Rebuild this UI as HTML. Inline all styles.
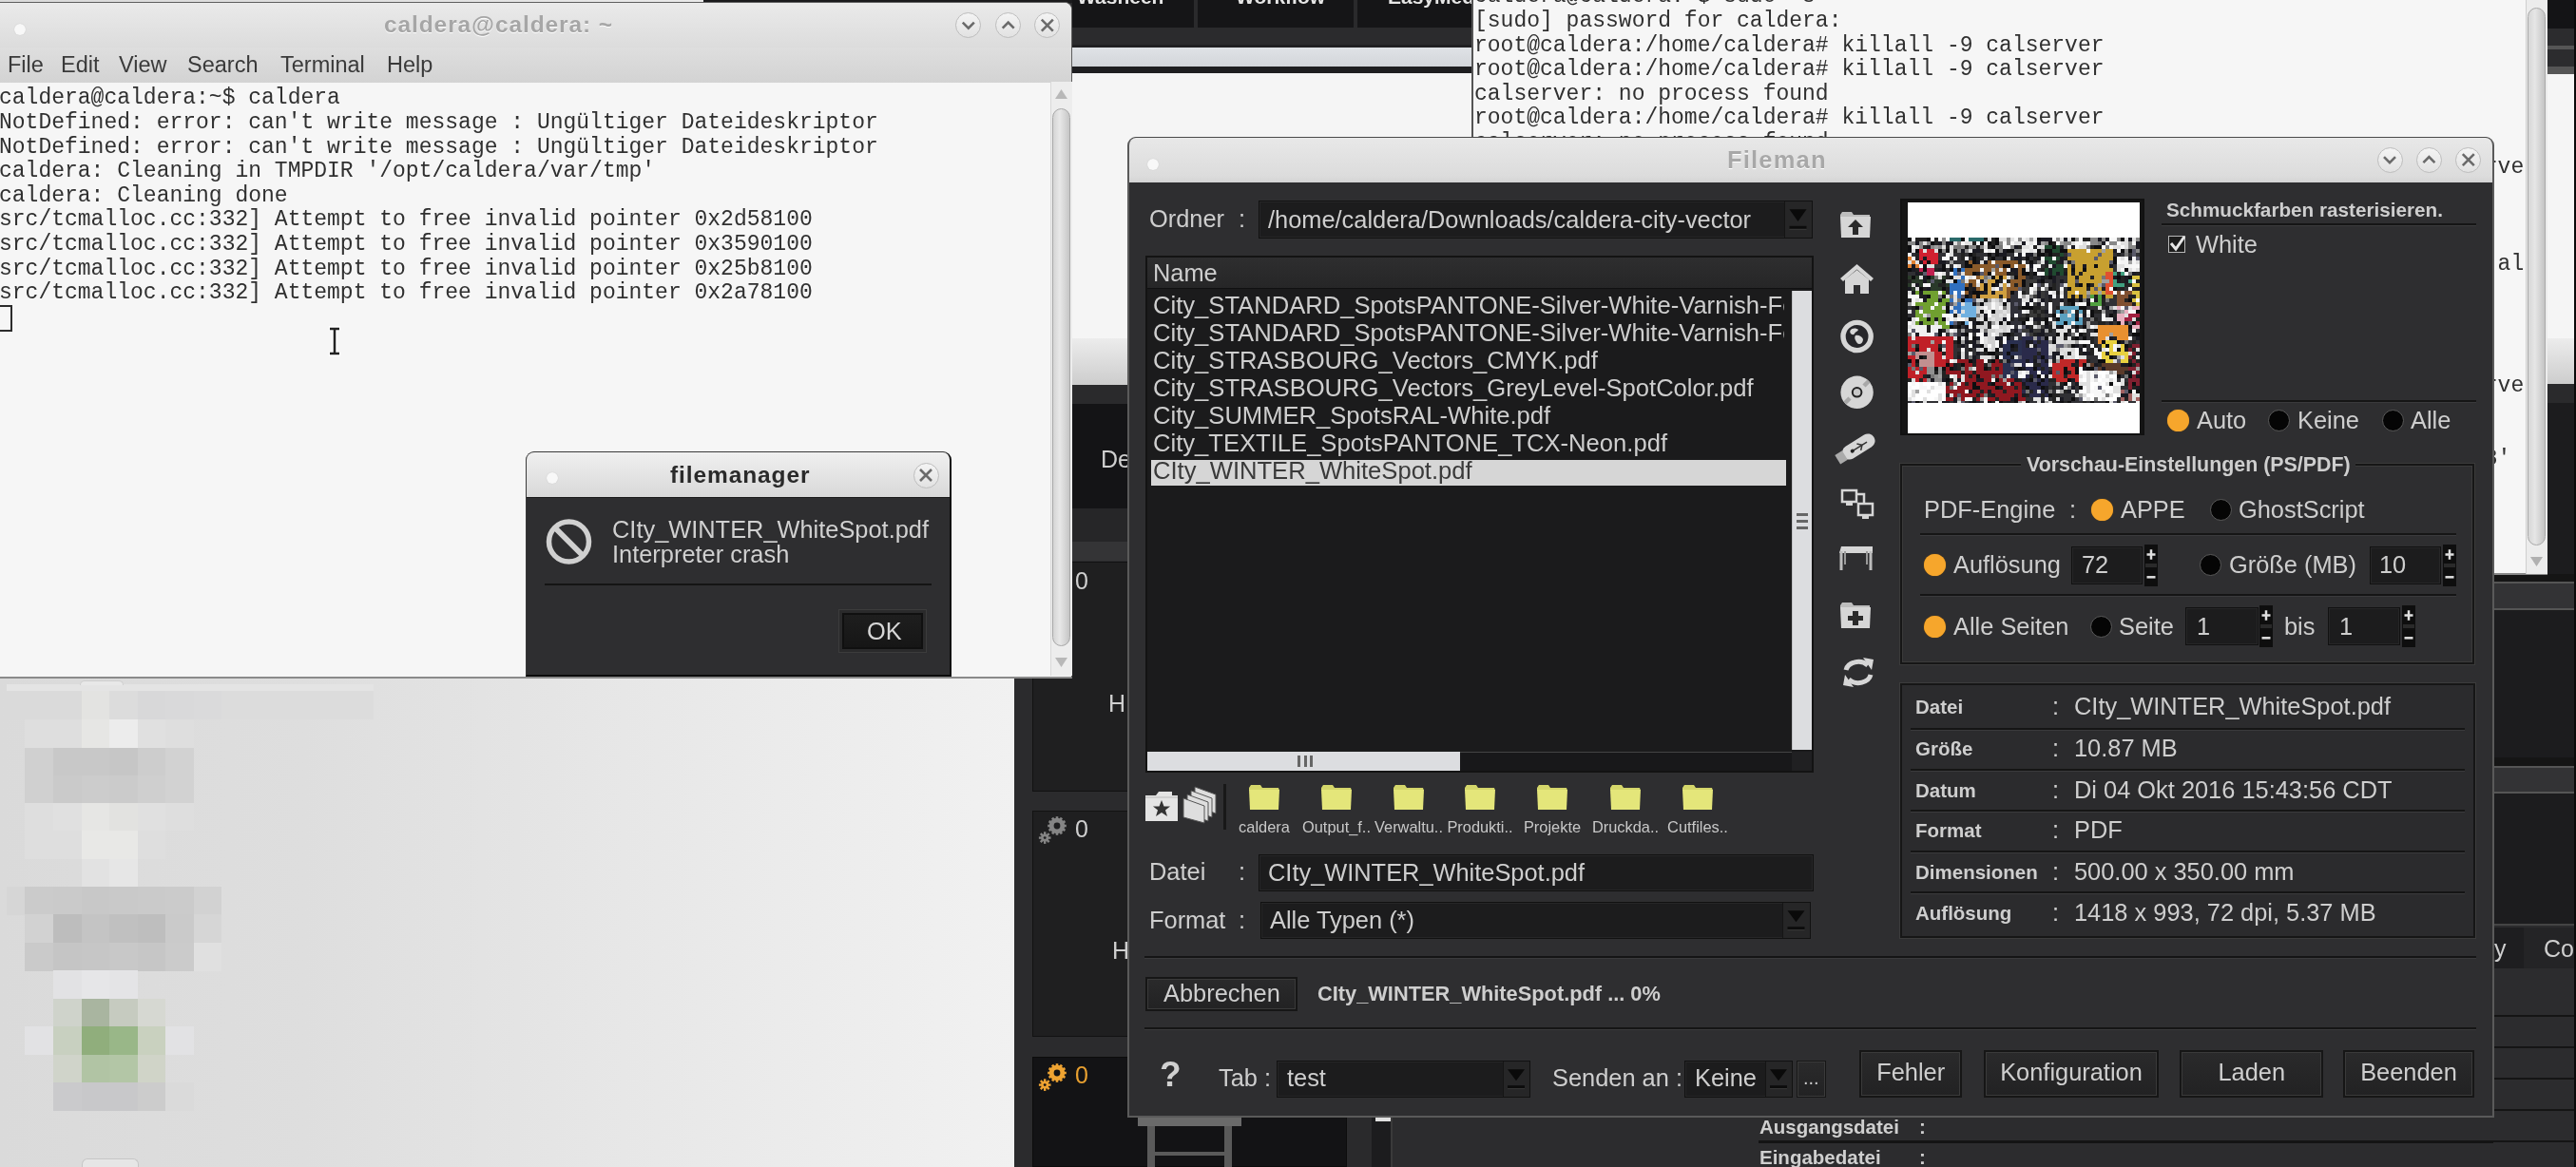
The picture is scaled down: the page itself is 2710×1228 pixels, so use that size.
<!DOCTYPE html>
<html><head><meta charset="utf-8">
<style>
html,body{margin:0;padding:0;}
body{width:2710px;height:1228px;overflow:hidden;position:relative;background:#e4e4e4;font-family:"Liberation Sans",sans-serif;}
.a{position:absolute;box-sizing:border-box;}
.t{position:absolute;white-space:pre;line-height:normal;will-change:transform;}
.ibox{position:absolute;box-sizing:border-box;background:#1c1c1d;border:1px solid #111;box-shadow:inset 0 0 0 1px #262627;}
.btn{position:absolute;box-sizing:border-box;background:linear-gradient(#2a2a2b,#222223);border:2px solid #161616;box-shadow:inset 0 0 0 1px #3a3a3a;}
.dd{position:absolute;box-sizing:border-box;background:#262627;border-left:1px solid #151515;}
.rad{position:absolute;box-sizing:border-box;border-radius:50%;}
.ro{background:#f6a62c;box-shadow:0 0 1px #b07010;}
.rb{background:#050505;border:1.5px solid #5a5a5a;}
.hl{position:absolute;height:2px;background:#151515;border-bottom:1px solid #3a3a3c;box-sizing:content-box;}
</style></head><body>

<div class="a" style="left:0px;top:0px;width:1067px;height:1228px;background:linear-gradient(90deg,#dadada 0%,#dedede 30%,#e8e8e8 65%,#f1f1f1 100%);"></div>
<div class="a" style="left:6.8px;top:727.0px;width:19.9px;height:30.1px;background:#dadada"></div>
<div class="a" style="left:26.2px;top:727.0px;width:30.4px;height:30.1px;background:#dadada"></div>
<div class="a" style="left:56.1px;top:727.0px;width:30.4px;height:30.1px;background:#dadada"></div>
<div class="a" style="left:86.0px;top:727.0px;width:29.5px;height:30.1px;background:#e3e3e1"></div>
<div class="a" style="left:115.0px;top:727.0px;width:30.3px;height:30.1px;background:#dcdcdc"></div>
<div class="a" style="left:144.8px;top:727.0px;width:29.5px;height:30.1px;background:#d8d8d9"></div>
<div class="a" style="left:173.8px;top:727.0px;width:30.3px;height:30.1px;background:#d9d9da"></div>
<div class="a" style="left:203.6px;top:727.0px;width:29.9px;height:30.1px;background:#dadadb"></div>
<div class="a" style="left:26.2px;top:756.6px;width:30.4px;height:30.8px;background:#dedede"></div>
<div class="a" style="left:56.1px;top:756.6px;width:30.4px;height:30.8px;background:#dedede"></div>
<div class="a" style="left:86.0px;top:756.6px;width:29.5px;height:30.8px;background:#e6e6e4"></div>
<div class="a" style="left:115.0px;top:756.6px;width:30.3px;height:30.8px;background:#ececec"></div>
<div class="a" style="left:144.8px;top:756.6px;width:29.5px;height:30.8px;background:#e0e0e0"></div>
<div class="a" style="left:173.8px;top:756.6px;width:30.3px;height:30.8px;background:#dedede"></div>
<div class="a" style="left:26.2px;top:786.9px;width:30.4px;height:29.4px;background:#d0d0d0"></div>
<div class="a" style="left:56.1px;top:786.9px;width:30.4px;height:29.4px;background:#c8c8c8"></div>
<div class="a" style="left:86.0px;top:786.9px;width:29.5px;height:29.4px;background:#c8c8c8"></div>
<div class="a" style="left:115.0px;top:786.9px;width:30.3px;height:29.4px;background:#c6c6c6"></div>
<div class="a" style="left:144.8px;top:786.9px;width:29.5px;height:29.4px;background:#cdcdcd"></div>
<div class="a" style="left:173.8px;top:786.9px;width:30.3px;height:29.4px;background:#d2d2d2"></div>
<div class="a" style="left:26.2px;top:815.8px;width:30.4px;height:29.5px;background:#d0d0d0"></div>
<div class="a" style="left:56.1px;top:815.8px;width:30.4px;height:29.5px;background:#cacaca"></div>
<div class="a" style="left:86.0px;top:815.8px;width:29.5px;height:29.5px;background:#cccccc"></div>
<div class="a" style="left:115.0px;top:815.8px;width:30.3px;height:29.5px;background:#cbcbcb"></div>
<div class="a" style="left:144.8px;top:815.8px;width:29.5px;height:29.5px;background:#cfcfcf"></div>
<div class="a" style="left:173.8px;top:815.8px;width:30.3px;height:29.5px;background:#d2d2d2"></div>
<div class="a" style="left:26.2px;top:844.8px;width:30.4px;height:29.7px;background:#dedede"></div>
<div class="a" style="left:56.1px;top:844.8px;width:30.4px;height:29.7px;background:#e0e0e0"></div>
<div class="a" style="left:86.0px;top:844.8px;width:29.5px;height:29.7px;background:#e6e6e4"></div>
<div class="a" style="left:115.0px;top:844.8px;width:30.3px;height:29.7px;background:#e2e2e0"></div>
<div class="a" style="left:144.8px;top:844.8px;width:29.5px;height:29.7px;background:#e0e0e0"></div>
<div class="a" style="left:173.8px;top:844.8px;width:30.3px;height:29.7px;background:#dedede"></div>
<div class="a" style="left:26.2px;top:874.0px;width:30.4px;height:30.1px;background:#dedede"></div>
<div class="a" style="left:56.1px;top:874.0px;width:30.4px;height:30.1px;background:#dedede"></div>
<div class="a" style="left:86.0px;top:874.0px;width:29.5px;height:30.1px;background:#e8e8e6"></div>
<div class="a" style="left:115.0px;top:874.0px;width:30.3px;height:30.1px;background:#e8e8e6"></div>
<div class="a" style="left:144.8px;top:874.0px;width:29.5px;height:30.1px;background:#dedede"></div>
<div class="a" style="left:86.0px;top:903.6px;width:29.5px;height:29.9px;background:#e2e2e2"></div>
<div class="a" style="left:115.0px;top:903.6px;width:30.3px;height:29.9px;background:#e6e6e6"></div>
<div class="a" style="left:6.8px;top:933.0px;width:19.9px;height:29.9px;background:#d6d6d6"></div>
<div class="a" style="left:26.2px;top:933.0px;width:30.4px;height:29.9px;background:#cbcbcb"></div>
<div class="a" style="left:56.1px;top:933.0px;width:30.4px;height:29.9px;background:#cacaca"></div>
<div class="a" style="left:86.0px;top:933.0px;width:29.5px;height:29.9px;background:#c8c8c8"></div>
<div class="a" style="left:115.0px;top:933.0px;width:30.3px;height:29.9px;background:#c9c9c9"></div>
<div class="a" style="left:144.8px;top:933.0px;width:29.5px;height:29.9px;background:#cacaca"></div>
<div class="a" style="left:173.8px;top:933.0px;width:30.3px;height:29.9px;background:#cbcbcb"></div>
<div class="a" style="left:203.6px;top:933.0px;width:29.9px;height:29.9px;background:#d2d2d2"></div>
<div class="a" style="left:26.2px;top:962.4px;width:30.4px;height:30.1px;background:#d2d2d2"></div>
<div class="a" style="left:56.1px;top:962.4px;width:30.4px;height:30.1px;background:#bdbdbd"></div>
<div class="a" style="left:86.0px;top:962.4px;width:29.5px;height:30.1px;background:#c4c4c4"></div>
<div class="a" style="left:115.0px;top:962.4px;width:30.3px;height:30.1px;background:#c0c0c0"></div>
<div class="a" style="left:144.8px;top:962.4px;width:29.5px;height:30.1px;background:#bebebe"></div>
<div class="a" style="left:173.8px;top:962.4px;width:30.3px;height:30.1px;background:#cacaca"></div>
<div class="a" style="left:203.6px;top:962.4px;width:29.9px;height:30.1px;background:#d6d6d6"></div>
<div class="a" style="left:26.2px;top:992.0px;width:30.4px;height:29.5px;background:#cacaca"></div>
<div class="a" style="left:56.1px;top:992.0px;width:30.4px;height:29.5px;background:#c5c5c5"></div>
<div class="a" style="left:86.0px;top:992.0px;width:29.5px;height:29.5px;background:#c6c6c6"></div>
<div class="a" style="left:115.0px;top:992.0px;width:30.3px;height:29.5px;background:#c8c8c8"></div>
<div class="a" style="left:144.8px;top:992.0px;width:29.5px;height:29.5px;background:#c6c6c6"></div>
<div class="a" style="left:173.8px;top:992.0px;width:30.3px;height:29.5px;background:#cbcbcb"></div>
<div class="a" style="left:203.6px;top:992.0px;width:29.9px;height:29.5px;background:#e0e0e0"></div>
<div class="a" style="left:56.1px;top:1021.0px;width:30.4px;height:30.2px;background:#e2e2e4"></div>
<div class="a" style="left:86.0px;top:1021.0px;width:29.5px;height:30.2px;background:#e6e6e8"></div>
<div class="a" style="left:115.0px;top:1021.0px;width:30.3px;height:30.2px;background:#e4e4e6"></div>
<div class="a" style="left:56.1px;top:1050.7px;width:30.4px;height:29.8px;background:#cfd3cb"></div>
<div class="a" style="left:86.0px;top:1050.7px;width:29.5px;height:29.8px;background:#a9b5a0"></div>
<div class="a" style="left:115.0px;top:1050.7px;width:30.3px;height:29.8px;background:#c6cbc0"></div>
<div class="a" style="left:144.8px;top:1050.7px;width:29.5px;height:29.8px;background:#d6d8d2"></div>
<div class="a" style="left:26.2px;top:1080.0px;width:30.4px;height:30.0px;background:#e2e2e4"></div>
<div class="a" style="left:56.1px;top:1080.0px;width:30.4px;height:30.0px;background:#c8d0c0"></div>
<div class="a" style="left:86.0px;top:1080.0px;width:29.5px;height:30.0px;background:#90ae7c"></div>
<div class="a" style="left:115.0px;top:1080.0px;width:30.3px;height:30.0px;background:#99b788"></div>
<div class="a" style="left:144.8px;top:1080.0px;width:29.5px;height:30.0px;background:#c9d1bf"></div>
<div class="a" style="left:173.8px;top:1080.0px;width:30.3px;height:30.0px;background:#e2e2e4"></div>
<div class="a" style="left:56.1px;top:1109.5px;width:30.4px;height:30.0px;background:#d0d4ca"></div>
<div class="a" style="left:86.0px;top:1109.5px;width:29.5px;height:30.0px;background:#b1c4a4"></div>
<div class="a" style="left:115.0px;top:1109.5px;width:30.3px;height:30.0px;background:#b3c6a6"></div>
<div class="a" style="left:144.8px;top:1109.5px;width:29.5px;height:30.0px;background:#d0d4c8"></div>
<div class="a" style="left:56.1px;top:1139.0px;width:30.4px;height:29.5px;background:#cacacc"></div>
<div class="a" style="left:86.0px;top:1139.0px;width:29.5px;height:29.5px;background:#c8c8ca"></div>
<div class="a" style="left:115.0px;top:1139.0px;width:30.3px;height:29.5px;background:#c8c8ca"></div>
<div class="a" style="left:144.8px;top:1139.0px;width:29.5px;height:29.5px;background:#cccccc"></div>
<div class="a" style="left:173.8px;top:1139.0px;width:30.3px;height:29.5px;background:#dadada"></div>
<div class="a" style="left:7px;top:720px;width:386px;height:7px;background:#e4e4e4;"></div>
<div class="a" style="left:233px;top:727px;width:160px;height:30px;background:#dcdcdc;"></div>
<div class="a" style="left:84px;top:716px;width:46px;height:5px;background:#e8e8e8;border-radius:6px 6px 0 0;border:1px solid #cfcfcf;border-bottom:none"></div>
<div class="a" style="left:86px;top:1219px;width:60px;height:9px;background:#e6e6e6;border-radius:6px 6px 0 0;border:1px solid #c6c6c6;border-bottom:none"></div>
<div class="a" style="left:1067px;top:0px;width:1643px;height:1228px;background:#2b2b2d;"></div>
<div class="a" style="left:740px;top:0px;width:930px;height:3px;background:#1a1a1c;"></div>
<div class="a" style="left:1128px;top:0px;width:430px;height:29px;background:#151517;"></div>
<div class="a" style="left:1256px;top:0px;width:4px;height:29px;background:#2a2a2c;"></div>
<div class="a" style="left:1424px;top:0px;width:4px;height:29px;background:#2a2a2c;"></div>
<div class="t " style="left:1133.0px;top:-15.5px;font-size:21px;color:#e6e6e6;font-family:'Liberation Sans',sans-serif;font-weight:bold;">Washeen</div>
<div class="t " style="left:1300.0px;top:-15.5px;font-size:21px;color:#e6e6e6;font-family:'Liberation Sans',sans-serif;font-weight:bold;">Workflow</div>
<div class="t " style="left:1460.0px;top:-15.5px;font-size:21px;color:#e6e6e6;font-family:'Liberation Sans',sans-serif;font-weight:bold;">EasyMedia</div>
<div class="a" style="left:1536px;top:54px;width:3px;height:14px;background:#555;"></div>
<div class="a" style="left:1541px;top:54px;width:3px;height:14px;background:#555;"></div>
<div class="a" style="left:1128px;top:47px;width:430px;height:3px;background:#202022;"></div>
<div class="a" style="left:1128px;top:50px;width:430px;height:20px;background:linear-gradient(#dfe2e6,#d3d6da);"></div>
<div class="a" style="left:1128px;top:70px;width:430px;height:7px;background:#1e1e20;"></div>
<div class="a" style="left:1128px;top:77px;width:430px;height:279px;background:#f5f5f5;"></div>
<div class="a" style="left:1128px;top:356px;width:430px;height:49px;background:linear-gradient(#ececec,#cdcdcd);"></div>
<div class="a" style="left:1128px;top:405px;width:60px;height:20px;background:#2a2a2c;"></div>
<div class="a" style="left:1128px;top:425px;width:60px;height:110px;background:#141416;"></div>
<div class="t " style="left:1158.0px;top:469.4px;font-size:25px;color:#cfcfcf;font-family:'Liberation Sans',sans-serif;">De</div>
<div class="a" style="left:1128px;top:535px;width:60px;height:35px;background:#262628;"></div>
<div class="a" style="left:1128px;top:570px;width:60px;height:20px;background:#343436;"></div>
<div class="a" style="left:1086px;top:591px;width:340px;height:242px;background:#1f1f20;border:1px solid #121212"></div>
<div class="t " style="left:1131.0px;top:597.4px;font-size:25px;color:#cfcfcf;font-family:'Liberation Sans',sans-serif;">0</div>
<div class="t " style="left:1166.0px;top:726.4px;font-size:25px;color:#cfcfcf;font-family:'Liberation Sans',sans-serif;">H</div>
<div class="a" style="left:1086px;top:853px;width:340px;height:238px;background:#1f1f20;border:1px solid #121212"></div>
<div class="t " style="left:1131.0px;top:858.4px;font-size:25px;color:#cfcfcf;font-family:'Liberation Sans',sans-serif;">0</div>
<svg class="a" style="left:1099.6px;top:856.5px;overflow:visible" width="24" height="24"><circle cx="12" cy="12" r="8.2" fill="#858585"/><rect x="10.7" y="2.2" width="2.6" height="3" fill="#858585" transform="rotate(0 12 12)"/><rect x="10.7" y="2.2" width="2.6" height="3" fill="#858585" transform="rotate(30 12 12)"/><rect x="10.7" y="2.2" width="2.6" height="3" fill="#858585" transform="rotate(60 12 12)"/><rect x="10.7" y="2.2" width="2.6" height="3" fill="#858585" transform="rotate(90 12 12)"/><rect x="10.7" y="2.2" width="2.6" height="3" fill="#858585" transform="rotate(120 12 12)"/><rect x="10.7" y="2.2" width="2.6" height="3" fill="#858585" transform="rotate(150 12 12)"/><rect x="10.7" y="2.2" width="2.6" height="3" fill="#858585" transform="rotate(180 12 12)"/><rect x="10.7" y="2.2" width="2.6" height="3" fill="#858585" transform="rotate(210 12 12)"/><rect x="10.7" y="2.2" width="2.6" height="3" fill="#858585" transform="rotate(240 12 12)"/><rect x="10.7" y="2.2" width="2.6" height="3" fill="#858585" transform="rotate(270 12 12)"/><rect x="10.7" y="2.2" width="2.6" height="3" fill="#858585" transform="rotate(300 12 12)"/><rect x="10.7" y="2.2" width="2.6" height="3" fill="#858585" transform="rotate(330 12 12)"/><circle cx="12" cy="12" r="3.4" fill="#1f1f20"/><circle cx="-0.8000000000000007" cy="24.6" r="4" fill="#858585"/><rect x="-2.000000000000001" y="18.3" width="2.4" height="3" fill="#858585" transform="rotate(0 -0.8000000000000007 24.6)"/><rect x="-2.000000000000001" y="18.3" width="2.4" height="3" fill="#858585" transform="rotate(45 -0.8000000000000007 24.6)"/><rect x="-2.000000000000001" y="18.3" width="2.4" height="3" fill="#858585" transform="rotate(90 -0.8000000000000007 24.6)"/><rect x="-2.000000000000001" y="18.3" width="2.4" height="3" fill="#858585" transform="rotate(135 -0.8000000000000007 24.6)"/><rect x="-2.000000000000001" y="18.3" width="2.4" height="3" fill="#858585" transform="rotate(180 -0.8000000000000007 24.6)"/><rect x="-2.000000000000001" y="18.3" width="2.4" height="3" fill="#858585" transform="rotate(225 -0.8000000000000007 24.6)"/><rect x="-2.000000000000001" y="18.3" width="2.4" height="3" fill="#858585" transform="rotate(270 -0.8000000000000007 24.6)"/><rect x="-2.000000000000001" y="18.3" width="2.4" height="3" fill="#858585" transform="rotate(315 -0.8000000000000007 24.6)"/><circle cx="-0.8000000000000007" cy="24.6" r="1.4" fill="#1f1f20"/></svg>
<div class="t " style="left:1170.0px;top:986.4px;font-size:25px;color:#cfcfcf;font-family:'Liberation Sans',sans-serif;">H</div>
<div class="a" style="left:1086px;top:1112px;width:331px;height:116px;background:#131315;border:1px solid #0c0c0c"></div>
<div class="t " style="left:1131.0px;top:1117.4px;font-size:25px;color:#e8a030;font-family:'Liberation Sans',sans-serif;">0</div>
<svg class="a" style="left:1099.6px;top:1116.6px;overflow:visible" width="24" height="24"><circle cx="12" cy="12" r="8.2" fill="#eea332"/><rect x="10.7" y="2.2" width="2.6" height="3" fill="#eea332" transform="rotate(0 12 12)"/><rect x="10.7" y="2.2" width="2.6" height="3" fill="#eea332" transform="rotate(30 12 12)"/><rect x="10.7" y="2.2" width="2.6" height="3" fill="#eea332" transform="rotate(60 12 12)"/><rect x="10.7" y="2.2" width="2.6" height="3" fill="#eea332" transform="rotate(90 12 12)"/><rect x="10.7" y="2.2" width="2.6" height="3" fill="#eea332" transform="rotate(120 12 12)"/><rect x="10.7" y="2.2" width="2.6" height="3" fill="#eea332" transform="rotate(150 12 12)"/><rect x="10.7" y="2.2" width="2.6" height="3" fill="#eea332" transform="rotate(180 12 12)"/><rect x="10.7" y="2.2" width="2.6" height="3" fill="#eea332" transform="rotate(210 12 12)"/><rect x="10.7" y="2.2" width="2.6" height="3" fill="#eea332" transform="rotate(240 12 12)"/><rect x="10.7" y="2.2" width="2.6" height="3" fill="#eea332" transform="rotate(270 12 12)"/><rect x="10.7" y="2.2" width="2.6" height="3" fill="#eea332" transform="rotate(300 12 12)"/><rect x="10.7" y="2.2" width="2.6" height="3" fill="#eea332" transform="rotate(330 12 12)"/><circle cx="12" cy="12" r="3.4" fill="#131315"/><circle cx="-0.8000000000000007" cy="24.6" r="4" fill="#eea332"/><rect x="-2.000000000000001" y="18.3" width="2.4" height="3" fill="#eea332" transform="rotate(0 -0.8000000000000007 24.6)"/><rect x="-2.000000000000001" y="18.3" width="2.4" height="3" fill="#eea332" transform="rotate(45 -0.8000000000000007 24.6)"/><rect x="-2.000000000000001" y="18.3" width="2.4" height="3" fill="#eea332" transform="rotate(90 -0.8000000000000007 24.6)"/><rect x="-2.000000000000001" y="18.3" width="2.4" height="3" fill="#eea332" transform="rotate(135 -0.8000000000000007 24.6)"/><rect x="-2.000000000000001" y="18.3" width="2.4" height="3" fill="#eea332" transform="rotate(180 -0.8000000000000007 24.6)"/><rect x="-2.000000000000001" y="18.3" width="2.4" height="3" fill="#eea332" transform="rotate(225 -0.8000000000000007 24.6)"/><rect x="-2.000000000000001" y="18.3" width="2.4" height="3" fill="#eea332" transform="rotate(270 -0.8000000000000007 24.6)"/><rect x="-2.000000000000001" y="18.3" width="2.4" height="3" fill="#eea332" transform="rotate(315 -0.8000000000000007 24.6)"/><circle cx="-0.8000000000000007" cy="24.6" r="1.4" fill="#131315"/></svg>
<div class="a" style="left:1417px;top:1175px;width:26px;height:53px;background:#2a2a2c;"></div>
<div class="a" style="left:1443px;top:1175px;width:22px;height:53px;background:#1c1c1e;border-right:2px solid #3a3a3a"></div>
<div class="a" style="left:1447px;top:1175px;width:16px;height:5px;background:#e0e0e0;"></div>
<div class="a" style="left:1465px;top:1175px;width:385px;height:53px;background:#2c2c2e;"></div>
<div class="a" style="left:1197px;top:1175px;width:109px;height:10px;background:#6a6a6a;"></div>
<div class="a" style="left:1207px;top:1185px;width:8px;height:43px;background:#5a5a5a;"></div>
<div class="a" style="left:1288px;top:1185px;width:8px;height:43px;background:#5a5a5a;"></div>
<div class="a" style="left:1215px;top:1212px;width:73px;height:4px;background:#5a5a5a;"></div>
<div class="a" style="left:1850px;top:1175px;width:860px;height:53px;background:#2c2c2e;"></div>
<div class="a" style="left:1850px;top:1200px;width:860px;height:3px;background:#141414;"></div>
<div class="t " style="left:1851.0px;top:1174.4px;font-size:20.5px;color:#cfcfcf;font-family:'Liberation Sans',sans-serif;font-weight:bold;">Ausgangsdatei</div>
<div class="t " style="left:2019.0px;top:1174.4px;font-size:20.5px;color:#cfcfcf;font-family:'Liberation Sans',sans-serif;font-weight:bold;">:</div>
<div class="t " style="left:1851.0px;top:1206.4px;font-size:20.5px;color:#cfcfcf;font-family:'Liberation Sans',sans-serif;font-weight:bold;">Eingabedatei</div>
<div class="t " style="left:2019.0px;top:1206.4px;font-size:20.5px;color:#cfcfcf;font-family:'Liberation Sans',sans-serif;font-weight:bold;">:</div>
<div class="a" style="left:2680px;top:0px;width:30px;height:30px;background:#141416;"></div>
<div class="a" style="left:2680px;top:30px;width:30px;height:18px;background:#2c2c2e;"></div>
<div class="a" style="left:2680px;top:48px;width:30px;height:4px;background:#555;"></div>
<div class="a" style="left:2680px;top:52px;width:30px;height:18px;background:#2c2c2e;"></div>
<div class="a" style="left:2680px;top:70px;width:30px;height:8px;background:#555;"></div>
<div class="a" style="left:2680px;top:78px;width:30px;height:278px;background:#f5f5f5;"></div>
<div class="a" style="left:2680px;top:356px;width:30px;height:48px;background:linear-gradient(#ececec,#cdcdcd);"></div>
<div class="a" style="left:2680px;top:404px;width:30px;height:20px;background:#2a2a2c;"></div>
<div class="a" style="left:2680px;top:424px;width:30px;height:180px;background:#1c1c1e;"></div>
<div class="a" style="left:2623px;top:604px;width:87px;height:8px;background:#151515;"></div>
<div class="a" style="left:2623px;top:612px;width:87px;height:30px;background:#333335;border-top:2px solid #555;border-bottom:2px solid #555"></div>
<div class="a" style="left:2623px;top:642px;width:87px;height:155px;background:#1c1c1e;"></div>
<div class="a" style="left:2623px;top:797px;width:87px;height:9px;background:#151515;"></div>
<div class="a" style="left:2623px;top:806px;width:87px;height:29px;background:#333335;border-top:2px solid #555;border-bottom:2px solid #555"></div>
<div class="a" style="left:2623px;top:835px;width:87px;height:139px;background:#1c1c1e;border-bottom:2px solid #444"></div>
<div class="a" style="left:2623px;top:976px;width:60px;height:43px;background:#1e1e20;border-right:2px solid #111"></div>
<div class="a" style="left:2655px;top:976px;width:55px;height:43px;background:#242426;"></div>
<div class="t " style="left:2676.0px;top:984.4px;font-size:25px;color:#cfcfcf;font-family:'Liberation Sans',sans-serif;">Co</div>
<div class="t " style="left:2624.0px;top:984.4px;font-size:25px;color:#cfcfcf;font-family:'Liberation Sans',sans-serif;">y</div>
<div class="a" style="left:2623px;top:1019px;width:87px;height:209px;background:#2c2c2e;"></div>
<div class="a" style="left:2623px;top:1068px;width:87px;height:2px;background:#151515;"></div>
<div class="a" style="left:2623px;top:1101px;width:87px;height:2px;background:#151515;"></div>
<div class="a" style="left:2623px;top:1134px;width:87px;height:2px;background:#151515;"></div>
<div class="a" style="left:2623px;top:1167px;width:87px;height:2px;background:#151515;"></div>
<div class="a" style="left:2623px;top:1200px;width:87px;height:2px;background:#151515;"></div>
<div class="a" style="left:2708px;top:0px;width:2px;height:1228px;background:#0a0a0a;"></div>
<div class="a" style="left:1548px;top:0px;width:1132px;height:605px;background:#f6f6f6;border-left:2px solid #555;border-bottom:2px solid #8a8a8a"></div>
<div class="a" style="left:2657px;top:0px;width:23px;height:604px;background:#ececec;border-left:1px solid #cfcfcf"></div>
<div class="a" style="left:2659px;top:8px;width:19px;height:566px;background:linear-gradient(90deg,#d6d6d6,#e6e6e6 40%,#c4c4c4);border-radius:10px;border:1px solid #a9a9a9"></div>
<svg class="a" style="left:2662px;top:586px" width="13" height="10"><path d="M0 0 H13 L6.5 10 Z" fill="#b0b0b0"/></svg>
<div class="a" style="left:1548.4px;top:0;width:1108.6px;height:604px;overflow:hidden">
<div class="t " style="left:2.8px;top:-16.7px;font-size:23.0px;color:#303030;font-family:'Liberation Mono',monospace;">caldera@caldera:~$ sudo -s</div>
<div class="t " style="left:2.8px;top:8.9px;font-size:23.0px;color:#303030;font-family:'Liberation Mono',monospace;">[sudo] password for caldera:</div>
<div class="t " style="left:2.8px;top:34.5px;font-size:23.0px;color:#303030;font-family:'Liberation Mono',monospace;">root@caldera:/home/caldera# killall -9 calserver</div>
<div class="t " style="left:2.8px;top:60.1px;font-size:23.0px;color:#303030;font-family:'Liberation Mono',monospace;">root@caldera:/home/caldera# killall -9 calserver</div>
<div class="t " style="left:2.8px;top:85.7px;font-size:23.0px;color:#303030;font-family:'Liberation Mono',monospace;">calserver: no process found</div>
<div class="t " style="left:2.8px;top:111.3px;font-size:23.0px;color:#303030;font-family:'Liberation Mono',monospace;">root@caldera:/home/caldera# killall -9 calserver</div>
<div class="t " style="left:2.8px;top:136.9px;font-size:23.0px;color:#303030;font-family:'Liberation Mono',monospace;">calserver: no process found</div>
<div class="t " style="left:2.8px;top:162.5px;font-size:23.0px;color:#303030;font-family:'Liberation Mono',monospace;">root@caldera:/home/caldera# xxxxxxxxxxxxxxxxxxxxxxxxxxxxxxxxxxxxxxxxxxxxxxxxxrve</div>
<div class="t " style="left:2.8px;top:264.9px;font-size:23.0px;color:#303030;font-family:'Liberation Mono',monospace;">root@caldera:/home/caldera# xxxxxxxxxxxxxxxxxxxxxxxxxxxxxxxxxxxxxxxxxxxxxxxxx:al</div>
<div class="t " style="left:2.8px;top:392.9px;font-size:23.0px;color:#303030;font-family:'Liberation Mono',monospace;">root@caldera:/home/caldera# xxxxxxxxxxxxxxxxxxxxxxxxxxxxxxxxxxxxxxxxxxxxxxxxxrve</div>
<div class="t " style="left:2.8px;top:469.7px;font-size:23.0px;color:#303030;font-family:'Liberation Mono',monospace;">caldera: Cleaning in TMPDIR xxxxxxxxxxxxxxxxxxxxxxxxxxxxxxxxxxxxxxxxxxxxxxxxx8&#x27;</div>
</div>
<div class="a" style="left:-12px;top:2px;width:1140px;height:712px;background:#f6f6f6;border:1px solid #5e5e5e;border-top-right-radius:8px;overflow:hidden;border-bottom:2px solid #8a8a8a">
<div class="a" style="left:0;top:0;width:1140px;height:47px;background:linear-gradient(#eaeaea,#dcdcdc)"></div>
<div class="a" style="left:0;top:47px;width:1140px;height:37px;background:linear-gradient(#dedede,#d3d3d3)"></div>
</div>
<div class="a" style="left:15px;top:25px;width:12px;height:12px;background:#f8f8f8;border-radius:50%;box-shadow:0 0 1px #bbb"></div>
<div class="t " style="left:404.0px;top:11.8px;font-size:24.5px;color:#a6a6a6;font-family:'Liberation Sans',sans-serif;font-weight:bold;letter-spacing:0.9px;text-shadow:0 1px 0 #fff">caldera@caldera: ~</div>
<div class="a" style="left:1005.3px;top:13.2px;width:27.0px;height:27.0px;border-radius:50%;border:1px solid #bdbdbd;background:linear-gradient(#f4f4f4,#e2e2e2)"></div>
<svg class="a" style="left:0;top:0;overflow:visible" width="1" height="1"><path d="M1012.8 23.7 L1018.8 29.7 L1024.8 23.7" stroke="#6a6a6a" stroke-width="2.6" fill="none"/></svg>
<div class="a" style="left:1047.2px;top:13.2px;width:27.0px;height:27.0px;border-radius:50%;border:1px solid #bdbdbd;background:linear-gradient(#f4f4f4,#e2e2e2)"></div>
<svg class="a" style="left:0;top:0;overflow:visible" width="1" height="1"><path d="M1054.7 29.7 L1060.7 23.7 L1066.7 29.7" stroke="#6a6a6a" stroke-width="2.6" fill="none"/></svg>
<div class="a" style="left:1088.3px;top:13.2px;width:27.0px;height:27.0px;border-radius:50%;border:1px solid #bdbdbd;background:linear-gradient(#f4f4f4,#e2e2e2)"></div>
<svg class="a" style="left:0;top:0;overflow:visible" width="1" height="1"><path d="M1095.8 20.7 L1107.8 32.7 M1107.8 20.7 L1095.8 32.7" stroke="#6a6a6a" stroke-width="2.6" fill="none"/></svg>
<div class="t " style="left:8.0px;top:54.7px;font-size:23.5px;color:#3a3a3a;font-family:'Liberation Sans',sans-serif;">File</div>
<div class="t " style="left:63.7px;top:54.7px;font-size:23.5px;color:#3a3a3a;font-family:'Liberation Sans',sans-serif;">Edit</div>
<div class="t " style="left:125.0px;top:54.7px;font-size:23.5px;color:#3a3a3a;font-family:'Liberation Sans',sans-serif;">View</div>
<div class="t " style="left:197.0px;top:54.7px;font-size:23.5px;color:#3a3a3a;font-family:'Liberation Sans',sans-serif;">Search</div>
<div class="t " style="left:295.0px;top:54.7px;font-size:23.5px;color:#3a3a3a;font-family:'Liberation Sans',sans-serif;">Terminal</div>
<div class="t " style="left:407.0px;top:54.7px;font-size:23.5px;color:#3a3a3a;font-family:'Liberation Sans',sans-serif;">Help</div>
<div class="a" style="left:1105px;top:86px;width:23px;height:625px;background:#ededed;border-left:1px solid #d8d8d8"></div>
<svg class="a" style="left:1110px;top:94px" width="13" height="10"><path d="M0 10 H13 L6.5 0 Z" fill="#b8b8b8"/></svg>
<div class="a" style="left:1107px;top:114px;width:19px;height:566px;background:linear-gradient(90deg,#d4d4d4,#e8e8e8 40%,#c6c6c6);border-radius:10px;border:1px solid #a8a8a8"></div>
<svg class="a" style="left:1110px;top:692px" width="13" height="10"><path d="M0 0 H13 L6.5 10 Z" fill="#b8b8b8"/></svg>
<div class="t " style="left:-1.3px;top:90.4px;font-size:23.0px;color:#303030;font-family:'Liberation Mono',monospace;">caldera@caldera:~$ caldera</div>
<div class="t " style="left:-1.3px;top:116.0px;font-size:23.0px;color:#303030;font-family:'Liberation Mono',monospace;">NotDefined: error: can&#x27;t write message : Ungültiger Dateideskriptor</div>
<div class="t " style="left:-1.3px;top:141.6px;font-size:23.0px;color:#303030;font-family:'Liberation Mono',monospace;">NotDefined: error: can&#x27;t write message : Ungültiger Dateideskriptor</div>
<div class="t " style="left:-1.3px;top:167.2px;font-size:23.0px;color:#303030;font-family:'Liberation Mono',monospace;">caldera: Cleaning in TMPDIR &#x27;/opt/caldera/var/tmp&#x27;</div>
<div class="t " style="left:-1.3px;top:192.8px;font-size:23.0px;color:#303030;font-family:'Liberation Mono',monospace;">caldera: Cleaning done</div>
<div class="t " style="left:-1.3px;top:218.4px;font-size:23.0px;color:#303030;font-family:'Liberation Mono',monospace;">src/tcmalloc.cc:332] Attempt to free invalid pointer 0x2d58100</div>
<div class="t " style="left:-1.3px;top:244.0px;font-size:23.0px;color:#303030;font-family:'Liberation Mono',monospace;">src/tcmalloc.cc:332] Attempt to free invalid pointer 0x3590100</div>
<div class="t " style="left:-1.3px;top:269.6px;font-size:23.0px;color:#303030;font-family:'Liberation Mono',monospace;">src/tcmalloc.cc:332] Attempt to free invalid pointer 0x25b8100</div>
<div class="t " style="left:-1.3px;top:295.2px;font-size:23.0px;color:#303030;font-family:'Liberation Mono',monospace;">src/tcmalloc.cc:332] Attempt to free invalid pointer 0x2a78100</div>
<div class="a" style="left:-2px;top:321px;width:15px;height:28px;background:transparent;border:2px solid #2c2c2c"></div>
<svg class="a" style="left:340px;top:343px" width="24" height="32"><path d="M6 2 H18 M12 2 V30 M6 30 H18" stroke="#fff" stroke-width="5" fill="none"/><path d="M7 3 H17 M12 3 V29 M7 29 H17" stroke="#222" stroke-width="2.5" fill="none"/></svg>
<div class="a" style="left:553px;top:475px;width:448px;height:237px;background:#2e2e30;border:1px solid #3a3a3a;border-right:2px solid #111;border-bottom:2px solid #0a0a0a;border-top-left-radius:9px;border-top-right-radius:9px;overflow:hidden">
<div class="a" style="left:0;top:0;width:448px;height:48px;background:linear-gradient(#f0f0f0,#d8d8d8);border-bottom:1px solid #1a1a1a"></div>
</div>
<div class="a" style="left:575px;top:497px;width:12px;height:12px;background:#f8f8f8;border-radius:50%;box-shadow:0 0 1px #bbb"></div>
<div class="t " style="left:704.5px;top:485.8px;font-size:24.5px;color:#2a2a2a;font-family:'Liberation Sans',sans-serif;font-weight:bold;letter-spacing:0.9px">filemanager</div>
<div class="a" style="left:960.5px;top:486.5px;width:27.0px;height:27.0px;border-radius:50%;border:1px solid #bdbdbd;background:linear-gradient(#f4f4f4,#e2e2e2)"></div>
<svg class="a" style="left:0;top:0;overflow:visible" width="1" height="1"><path d="M968 494 L980 506 M980 494 L968 506" stroke="#6a6a6a" stroke-width="2.6" fill="none"/></svg>
<svg class="a" style="left:570px;top:542px" width="58" height="58"><circle cx="28.5" cy="28" r="21" stroke="#d0d0d0" stroke-width="5.5" fill="none"/><path d="M13.5 13 L43.5 43" stroke="#d0d0d0" stroke-width="6"/></svg>
<div class="t " style="left:644.3px;top:543.0px;font-size:25.4px;color:#d0d0d0;font-family:'Liberation Sans',sans-serif;">CIty_WINTER_WhiteSpot.pdf</div>
<div class="t " style="left:644.3px;top:569.0px;font-size:25.4px;color:#d0d0d0;font-family:'Liberation Sans',sans-serif;">Interpreter crash</div>
<div class="a" style="left:573px;top:614px;width:407px;height:2px;background:#141414"></div>
<div class="a" style="left:882px;top:641px;width:93px;height:46px;background:#2a2a2b;border:1px solid #3c3c3c"></div>
<div class="a" style="left:886px;top:645px;width:85px;height:38px;background:linear-gradient(#1e1e1e,#161616);border:2px solid #101010"></div>
<div class="t " style="left:912.0px;top:650.0px;font-size:25.4px;color:#d6d6d6;font-family:'Liberation Sans',sans-serif;">OK</div>
<div class="a" style="left:1186px;top:144px;width:1438px;height:1032px;background:#2e2e30;border:2px solid #5a5a5a;border-top:1px solid #4a4a4a;border-top-left-radius:9px;border-top-right-radius:9px;overflow:hidden">
<div class="a" style="left:0;top:0;width:1438px;height:47px;background:linear-gradient(#e8e8e8,#dcdcdc 85%,#d4d4d4)"></div>
</div>
<div class="a" style="left:1207px;top:167px;width:12px;height:12px;background:#f8f8f8;border-radius:50%;box-shadow:0 0 1px #bbb"></div>
<div class="t " style="left:1817.0px;top:153.9px;font-size:25.5px;color:#a8a8a8;font-family:'Liberation Sans',sans-serif;font-weight:bold;letter-spacing:1.2px;text-shadow:0 1px 0 #fff">Fileman</div>
<div class="a" style="left:2500.5px;top:154.7px;width:27.0px;height:27.0px;border-radius:50%;border:1px solid #bdbdbd;background:linear-gradient(#f4f4f4,#e2e2e2)"></div>
<svg class="a" style="left:0;top:0;overflow:visible" width="1" height="1"><path d="M2508 165.2 L2514 171.2 L2520 165.2" stroke="#6a6a6a" stroke-width="2.6" fill="none"/></svg>
<div class="a" style="left:2541.9px;top:154.7px;width:27.0px;height:27.0px;border-radius:50%;border:1px solid #bdbdbd;background:linear-gradient(#f4f4f4,#e2e2e2)"></div>
<svg class="a" style="left:0;top:0;overflow:visible" width="1" height="1"><path d="M2549.4 171.2 L2555.4 165.2 L2561.4 171.2" stroke="#6a6a6a" stroke-width="2.6" fill="none"/></svg>
<div class="a" style="left:2583.3px;top:154.7px;width:27.0px;height:27.0px;border-radius:50%;border:1px solid #bdbdbd;background:linear-gradient(#f4f4f4,#e2e2e2)"></div>
<svg class="a" style="left:0;top:0;overflow:visible" width="1" height="1"><path d="M2590.8 162.2 L2602.8 174.2 M2602.8 162.2 L2590.8 174.2" stroke="#6a6a6a" stroke-width="2.6" fill="none"/></svg>
<div class="t " style="left:1209.0px;top:216.0px;font-size:25.4px;color:#cecece;font-family:'Liberation Sans',sans-serif;">Ordner</div>
<div class="t " style="left:1303.0px;top:216.0px;font-size:25.4px;color:#cecece;font-family:'Liberation Sans',sans-serif;">:</div>
<div class="ibox" style="left:1324px;top:211px;width:583px;height:40px;"></div>
<div class="dd" style="left:1877px;top:212px;width:29px;height:38px"></div>
<svg class="a" style="left:1877px;top:212px" width="29" height="38"><path d="M5.5 8.36 H23.5 L14.5 20.900000000000002 Z" fill="#0a0a0a"/><rect x="5.5" y="25.840000000000003" width="18" height="3" fill="#0c0c0c"/><rect x="5.5" y="28.840000000000003" width="18" height="1" fill="#3a3a3a"/></svg>
<div class="t " style="left:1334.2px;top:216.5px;font-size:25.4px;color:#cecece;font-family:'Liberation Sans',sans-serif;">/home/caldera/Downloads/caldera-city-vector</div>
<div class="a" style="left:1205px;top:269px;width:703px;height:544px;background:#1b1b1c;border:2px solid #131313"></div>
<div class="a" style="left:1207px;top:271px;width:699px;height:33px;background:linear-gradient(#2e2e2f,#262627);border-bottom:1px solid #111"></div>
<div class="t " style="left:1213.0px;top:273.0px;font-size:25.4px;color:#cecece;font-family:'Liberation Sans',sans-serif;">Name</div>
<div class="a" style="left:1211px;top:484px;width:668px;height:27px;background:#d6d6d6;"></div>
<div class="a" style="left:1207px;top:306px;width:670px;height:230px;overflow:hidden">
<div class="t" style="left:5.5px;top:0.8px;font-size:25.6px;color:#cecece">City_STANDARD_SpotsPANTONE-Silver-White-Varnish-Foil.pdf</div>
<div class="t" style="left:5.5px;top:29.9px;font-size:25.6px;color:#cecece">City_STANDARD_SpotsPANTONE-Silver-White-Varnish-Foil2.pdf</div>
<div class="t" style="left:5.5px;top:59.0px;font-size:25.6px;color:#cecece">City_STRASBOURG_Vectors_CMYK.pdf</div>
<div class="t" style="left:5.5px;top:88.1px;font-size:25.6px;color:#cecece">City_STRASBOURG_Vectors_GreyLevel-SpotColor.pdf</div>
<div class="t" style="left:5.5px;top:117.2px;font-size:25.6px;color:#cecece">City_SUMMER_SpotsRAL-White.pdf</div>
<div class="t" style="left:5.5px;top:146.3px;font-size:25.6px;color:#cecece">City_TEXTILE_SpotsPANTONE_TCX-Neon.pdf</div>
<div class="t" style="left:5.5px;top:175.4px;font-size:25.6px;color:#3a3a3a">CIty_WINTER_WhiteSpot.pdf</div>
</div>
<div class="a" style="left:1885px;top:306px;width:21px;height:483px;background:#dcdde0;border-left:1px solid #bfc0c3"></div>
<div class="a" style="left:1890px;top:540.0px;width:12px;height:3px;background:#666;"></div>
<div class="a" style="left:1890px;top:546.8px;width:12px;height:3px;background:#666;"></div>
<div class="a" style="left:1890px;top:553.6px;width:12px;height:3px;background:#666;"></div>
<div class="a" style="left:1207px;top:791px;width:678px;height:20px;background:#18181a;border-top:1px solid #444"></div>
<div class="a" style="left:1207px;top:791px;width:329px;height:20px;background:#dcdde0;"></div>
<div class="a" style="left:1365.0px;top:795px;width:3px;height:12px;background:#666;"></div>
<div class="a" style="left:1371.5px;top:795px;width:3px;height:12px;background:#666;"></div>
<div class="a" style="left:1378.0px;top:795px;width:3px;height:12px;background:#666;"></div>
<div class="a" style="left:1885px;top:791px;width:21px;height:20px;background:#202022;"></div>
<svg class="a" style="left:1203px;top:829px" width="40" height="38"><path d="M2 8 H13 L16 4 H30 V8 H36 V35 H2 Z" fill="#e4e4e4"/><path d="M2 10 H36" stroke="#bbb" stroke-width="1"/><path d="M19 13 L21.5 19.5 L28 19.5 L23 23.5 L25 30 L19 26 L13 30 L15 23.5 L10 19.5 L16.5 19.5 Z" fill="#333"/></svg>
<svg class="a" style="left:1243px;top:826px" width="40" height="42"><g fill="#dedede" stroke="#555" stroke-width="1"><path d="M14 2 L36 10 L36 30 L14 22 Z"/><path d="M10 6 L32 14 L32 34 L10 26 Z"/><path d="M6 10 L28 18 L28 38 L6 30 Z"/><path d="M2 14 L24 22 L24 40 L2 34 Z"/></g></svg>
<div class="a" style="left:1287px;top:825px;width:3px;height:48px;background:#181818;"></div>
<svg class="a" style="left:1313px;top:824px" width="34" height="30"><path d="M1 5 L3 2 H13 L15 5 H32 L33 8 H1 Z" fill="#d4d66a"/><path d="M1 7 H33 L32 28 H2 Z" fill="#e4e67a"/></svg>
<div class="t" style="left:1270px;width:120px;text-align:center;top:861.2px;font-size:16.4px;color:#c8c8c8">caldera</div>
<svg class="a" style="left:1388.5px;top:824px" width="34" height="30"><path d="M1 5 L3 2 H13 L15 5 H32 L33 8 H1 Z" fill="#d4d66a"/><path d="M1 7 H33 L32 28 H2 Z" fill="#e4e67a"/></svg>
<div class="t" style="left:1345.5px;width:120px;text-align:center;top:861.2px;font-size:16.4px;color:#c8c8c8">Output_f..</div>
<svg class="a" style="left:1464.6px;top:824px" width="34" height="30"><path d="M1 5 L3 2 H13 L15 5 H32 L33 8 H1 Z" fill="#d4d66a"/><path d="M1 7 H33 L32 28 H2 Z" fill="#e4e67a"/></svg>
<div class="t" style="left:1421.6px;width:120px;text-align:center;top:861.2px;font-size:16.4px;color:#c8c8c8">Verwaltu..</div>
<svg class="a" style="left:1540px;top:824px" width="34" height="30"><path d="M1 5 L3 2 H13 L15 5 H32 L33 8 H1 Z" fill="#d4d66a"/><path d="M1 7 H33 L32 28 H2 Z" fill="#e4e67a"/></svg>
<div class="t" style="left:1497px;width:120px;text-align:center;top:861.2px;font-size:16.4px;color:#c8c8c8">Produkti..</div>
<svg class="a" style="left:1616px;top:824px" width="34" height="30"><path d="M1 5 L3 2 H13 L15 5 H32 L33 8 H1 Z" fill="#d4d66a"/><path d="M1 7 H33 L32 28 H2 Z" fill="#e4e67a"/></svg>
<div class="t" style="left:1573px;width:120px;text-align:center;top:861.2px;font-size:16.4px;color:#c8c8c8">Projekte</div>
<svg class="a" style="left:1692.5px;top:824px" width="34" height="30"><path d="M1 5 L3 2 H13 L15 5 H32 L33 8 H1 Z" fill="#d4d66a"/><path d="M1 7 H33 L32 28 H2 Z" fill="#e4e67a"/></svg>
<div class="t" style="left:1649.5px;width:120px;text-align:center;top:861.2px;font-size:16.4px;color:#c8c8c8">Druckda..</div>
<svg class="a" style="left:1768.5px;top:824px" width="34" height="30"><path d="M1 5 L3 2 H13 L15 5 H32 L33 8 H1 Z" fill="#d4d66a"/><path d="M1 7 H33 L32 28 H2 Z" fill="#e4e67a"/></svg>
<div class="t" style="left:1725.5px;width:120px;text-align:center;top:861.2px;font-size:16.4px;color:#c8c8c8">Cutfiles..</div>
<div class="t " style="left:1209.0px;top:903.0px;font-size:25.4px;color:#cecece;font-family:'Liberation Sans',sans-serif;">Datei</div>
<div class="t " style="left:1303.0px;top:903.0px;font-size:25.4px;color:#cecece;font-family:'Liberation Sans',sans-serif;">:</div>
<div class="ibox" style="left:1324px;top:899px;width:584px;height:39px;"></div>
<div class="t " style="left:1333.7px;top:903.5px;font-size:25.4px;color:#cecece;font-family:'Liberation Sans',sans-serif;">CIty_WINTER_WhiteSpot.pdf</div>
<div class="t " style="left:1209.0px;top:953.5px;font-size:25.4px;color:#cecece;font-family:'Liberation Sans',sans-serif;">Format</div>
<div class="t " style="left:1303.0px;top:953.5px;font-size:25.4px;color:#cecece;font-family:'Liberation Sans',sans-serif;">:</div>
<div class="ibox" style="left:1326px;top:949px;width:579px;height:39px;"></div>
<div class="dd" style="left:1875px;top:950px;width:29px;height:37px"></div>
<svg class="a" style="left:1875px;top:950px" width="29" height="37"><path d="M5.5 8.14 H23.5 L14.5 20.35 Z" fill="#0a0a0a"/><rect x="5.5" y="25.16" width="18" height="3" fill="#0c0c0c"/><rect x="5.5" y="28.16" width="18" height="1" fill="#3a3a3a"/></svg>
<div class="t " style="left:1335.5px;top:954.0px;font-size:25.4px;color:#cecece;font-family:'Liberation Sans',sans-serif;">Alle Typen (*)</div>
<div class="hl" style="left:1204px;top:1006px;width:1401px"></div>
<div class="hl" style="left:1204px;top:1081px;width:1401px"></div>
<div class="btn" style="left:1205px;top:1028px;width:160px;height:36px"></div>
<div class="t " style="left:1223.7px;top:1031.0px;font-size:25.4px;color:#cecece;font-family:'Liberation Sans',sans-serif;">Abbrechen</div>
<div class="t " style="left:1386.0px;top:1032.8px;font-size:21.8px;color:#cecece;font-family:'Liberation Sans',sans-serif;font-weight:bold;">CIty_WINTER_WhiteSpot.pdf ... 0%</div>
<div class="t " style="left:1220.0px;top:1109.5px;font-size:37px;color:#d0d0d0;font-family:'Liberation Sans',sans-serif;font-weight:bold;">?</div>
<div class="t " style="left:1282.0px;top:1120.0px;font-size:25.4px;color:#cecece;font-family:'Liberation Sans',sans-serif;">Tab :</div>
<div class="ibox" style="left:1343px;top:1116px;width:267px;height:39px;"></div>
<div class="dd" style="left:1581px;top:1117px;width:28px;height:37px"></div>
<svg class="a" style="left:1581px;top:1117px" width="28" height="37"><path d="M5.0 8.14 H23.0 L14.0 20.35 Z" fill="#0a0a0a"/><rect x="5.0" y="25.16" width="18" height="3" fill="#0c0c0c"/><rect x="5.0" y="28.16" width="18" height="1" fill="#3a3a3a"/></svg>
<div class="t " style="left:1353.8px;top:1120.0px;font-size:25.4px;color:#cecece;font-family:'Liberation Sans',sans-serif;">test</div>
<div class="t " style="left:1633.0px;top:1120.0px;font-size:25.4px;color:#cecece;font-family:'Liberation Sans',sans-serif;">Senden an :</div>
<div class="ibox" style="left:1772px;top:1116px;width:114px;height:39px;"></div>
<div class="dd" style="left:1857px;top:1117px;width:28px;height:37px"></div>
<svg class="a" style="left:1857px;top:1117px" width="28" height="37"><path d="M5.0 8.14 H23.0 L14.0 20.35 Z" fill="#0a0a0a"/><rect x="5.0" y="25.16" width="18" height="3" fill="#0c0c0c"/><rect x="5.0" y="28.16" width="18" height="1" fill="#3a3a3a"/></svg>
<div class="t " style="left:1783.0px;top:1120.0px;font-size:25.4px;color:#cecece;font-family:'Liberation Sans',sans-serif;">Keine</div>
<div class="btn" style="left:1890px;top:1116px;width:31px;height:39px;border-width:1px"></div>
<div class="t " style="left:1897.0px;top:1122.9px;font-size:20px;color:#cecece;font-family:'Liberation Sans',sans-serif;">...</div>
<div class="btn" style="left:1955.7px;top:1105px;width:108.3px;height:50px"></div>
<div class="t" style="left:1955.7px;width:108.3px;text-align:center;top:1114.0px;font-size:25.4px;color:#cecece">Fehler</div>
<div class="btn" style="left:2086.7px;top:1105px;width:184.0px;height:50px"></div>
<div class="t" style="left:2086.7px;width:184.0px;text-align:center;top:1114.0px;font-size:25.4px;color:#cecece">Konfiguration</div>
<div class="btn" style="left:2292.5px;top:1105px;width:151.5px;height:50px"></div>
<div class="t" style="left:2292.5px;width:151.5px;text-align:center;top:1114.0px;font-size:25.4px;color:#cecece">Laden</div>
<div class="btn" style="left:2465px;top:1105px;width:138.0px;height:50px"></div>
<div class="t" style="left:2465px;width:138.0px;text-align:center;top:1114.0px;font-size:25.4px;color:#cecece">Beenden</div>
<svg class="a" style="left:1935px;top:222px;overflow:visible" width="34" height="29"><path d="M1 4 L3 1 H13 L15 4 H32 V7 H1 Z" fill="#bdbdbd"/><path d="M1 6 H33 L32 28 H2 Z" fill="#d6d6d6"/><path d="M17 9 L25 17 H20 V25 H14 V17 H9 Z" fill="#2a2a2a"/></svg>
<svg class="a" style="left:1935px;top:277px;overflow:visible" width="37" height="33"><path d="M18.5 1 L36 16 L33 19 L18.5 6.5 L4 19 L1 16 Z" fill="#d6d6d6"/><path d="M6 17 L18.5 7 L31 17 V32 H22 V23 H15 V32 H6 Z" fill="#d6d6d6"/></svg>
<svg class="a" style="left:1936px;top:336px;overflow:visible" width="36" height="36"><circle cx="17.6" cy="18" r="14.6" stroke="#d6d6d6" stroke-width="5.4" fill="#26262a"/><path d="M11 11 C13 9 17 9 19 11 C18 13 16 13 15 15 C14 17 12 16 11 15 C10 14 10 12 11 11 Z M16 17 C19 16 23 18 24 21 C24 24 22 26 20 26 C18 26 17 24 16 22 C15 20 15 18 16 17 Z" fill="#d6d6d6"/></svg>
<svg class="a" style="left:1936px;top:395px;overflow:visible" width="36" height="36"><circle cx="17.6" cy="17.8" r="17.2" fill="#d6d6d6"/><path d="M5 29 L10 24 M25 11 L30 6" stroke="#a8a8a8" stroke-width="4.5"/><circle cx="17.6" cy="17.8" r="4.8" fill="#c8c8c8" stroke="#222" stroke-width="2"/></svg>
<svg class="a" style="left:1928px;top:452px;overflow:visible" width="50" height="40"><g transform="rotate(-32 25 20)"><rect x="9" y="12" width="38" height="15" rx="7.5" fill="#d6d6d6"/><rect x="2" y="14" width="9" height="11" fill="#aaa"/><path d="M20 20 H38 M28 16 L32 20 L28 24" stroke="#333" stroke-width="1.5" fill="none"/><circle cx="20" cy="20" r="2" fill="#222"/></g></svg>
<svg class="a" style="left:1936px;top:514px;overflow:visible" width="37" height="34"><g fill="none" stroke="#d6d6d6" stroke-width="2.5"><rect x="2" y="2" width="15" height="12"/><rect x="19" y="16" width="15" height="12"/><path d="M17 6 H25 V16"/></g><path d="M6 15 H13 V18 H6 Z M23 29 H30 V32 H23 Z" fill="#d6d6d6"/></svg>
<svg class="a" style="left:1934px;top:574px;overflow:visible" width="37" height="27"><path d="M3 1 H36 V8 H1 Z" fill="#d6d6d6"/><path d="M3 6 V26 M34 6 V26" stroke="#bcbcbc" stroke-width="3"/><path d="M7 6 V20 M30 6 V20" stroke="#9a9a9a" stroke-width="2"/></svg>
<svg class="a" style="left:1935px;top:633px;overflow:visible" width="34" height="29"><path d="M1 4 L3 1 H13 L15 4 H32 V7 H1 Z" fill="#bdbdbd"/><path d="M1 6 H33 L32 28 H2 Z" fill="#d6d6d6"/><path d="M14 10 H20 V15 H25 V20 H20 V25 H14 V20 H9 V15 H14 Z" fill="#2a2a2a"/></svg>
<svg class="a" style="left:1937px;top:690px;overflow:visible" width="36" height="35"><g fill="none" stroke="#d6d6d6" stroke-width="5"><path d="M5 15 C7 7 20 3 28 10"/><path d="M31 20 C29 28 16 32 8 25"/></g><path d="M23 2 L34 4 L32 15 Z M13 33 L2 31 L4 20 Z" fill="#d6d6d6"/></svg>
<div class="a" style="left:1999px;top:209px;width:257px;height:249px;background:#151515;border:2px solid #111"></div>
<div class="a" style="left:2007px;top:213px;width:244px;height:243px;background:#ffffff;"></div>
<svg class="a" style="left:2007px;top:250px" width="244" height="174" shape-rendering="crispEdges"><path fill="#0e0e10" d="M0 0h4v4h-4zM20 0h4v4h-4zM56 0h4v4h-4zM92 0h4v4h-4zM136 0h4v4h-4zM172 0h4v4h-4zM224 0h4v4h-4zM24 4h4v4h-4zM76 4h4v4h-4zM84 4h4v4h-4zM92 4h4v4h-4zM148 4h4v4h-4zM0 8h4v4h-4zM88 8h4v4h-4zM152 8h4v4h-4zM196 8h4v4h-4zM200 8h4v4h-4zM0 12h4v4h-4zM8 12h4v4h-4zM32 12h4v4h-4zM40 12h4v4h-4zM92 12h4v4h-4zM104 12h4v4h-4zM108 12h4v4h-4zM136 12h4v4h-4zM144 12h4v4h-4zM148 12h4v4h-4zM160 12h4v4h-4zM164 12h4v4h-4zM224 12h4v4h-4zM232 12h4v4h-4zM64 16h4v4h-4zM84 16h4v4h-4zM92 16h4v4h-4zM136 16h4v4h-4zM140 16h4v4h-4zM148 16h4v4h-4zM68 20h4v4h-4zM88 20h4v4h-4zM100 20h4v4h-4zM124 20h4v4h-4zM216 20h4v4h-4zM20 24h4v4h-4zM60 24h4v4h-4zM68 24h4v4h-4zM128 24h4v4h-4zM216 24h4v4h-4zM16 28h4v4h-4zM36 28h4v4h-4zM60 28h4v4h-4zM64 28h4v4h-4zM100 28h4v4h-4zM104 28h4v4h-4zM196 28h4v4h-4zM0 32h4v4h-4zM16 32h4v4h-4zM36 32h4v4h-4zM44 32h4v4h-4zM120 32h4v4h-4zM172 32h4v4h-4zM184 32h4v4h-4zM228 32h4v4h-4zM68 36h4v4h-4zM84 36h4v4h-4zM120 36h4v4h-4zM124 36h4v4h-4zM132 36h4v4h-4zM4 40h4v4h-4zM20 40h4v4h-4zM44 40h4v4h-4zM88 40h4v4h-4zM96 40h4v4h-4zM112 40h4v4h-4zM148 40h4v4h-4zM220 40h4v4h-4zM232 40h4v4h-4zM36 44h4v4h-4zM48 44h4v4h-4zM92 44h4v4h-4zM120 44h4v4h-4zM140 44h4v4h-4zM80 48h4v4h-4zM88 48h4v4h-4zM120 48h4v4h-4zM128 48h4v4h-4zM180 48h4v4h-4zM188 48h4v4h-4zM12 52h4v4h-4zM36 52h4v4h-4zM60 52h4v4h-4zM80 52h4v4h-4zM148 52h4v4h-4zM168 52h4v4h-4zM216 52h4v4h-4zM68 56h4v4h-4zM72 56h4v4h-4zM108 56h4v4h-4zM20 60h4v4h-4zM36 60h4v4h-4zM60 60h4v4h-4zM72 60h4v4h-4zM56 64h4v4h-4zM168 64h4v4h-4zM172 64h4v4h-4zM180 64h4v4h-4zM232 64h4v4h-4zM76 68h4v4h-4zM100 68h4v4h-4zM172 68h4v4h-4zM188 68h4v4h-4zM8 72h4v4h-4zM40 72h4v4h-4zM120 72h4v4h-4zM124 72h4v4h-4zM128 72h4v4h-4zM180 72h4v4h-4zM184 72h4v4h-4zM40 76h4v4h-4zM76 76h4v4h-4zM88 76h4v4h-4zM192 76h4v4h-4zM240 76h4v4h-4zM152 80h4v4h-4zM192 80h4v4h-4zM212 80h4v4h-4zM0 84h4v4h-4zM20 84h4v4h-4zM36 84h4v4h-4zM80 84h4v4h-4zM124 84h4v4h-4zM144 84h4v4h-4zM156 84h4v4h-4zM176 84h4v4h-4zM56 88h4v4h-4zM72 88h4v4h-4zM96 88h4v4h-4zM104 88h4v4h-4zM120 88h4v4h-4zM144 88h4v4h-4zM164 88h4v4h-4zM220 88h4v4h-4zM236 88h4v4h-4zM44 92h4v4h-4zM52 92h4v4h-4zM160 92h4v4h-4zM176 92h4v4h-4zM184 92h4v4h-4zM232 92h4v4h-4zM32 96h4v4h-4zM196 96h4v4h-4zM32 100h4v4h-4zM60 100h4v4h-4zM104 100h4v4h-4zM156 100h4v4h-4zM164 100h4v4h-4zM180 100h4v4h-4zM236 100h4v4h-4zM240 100h4v4h-4zM52 104h4v4h-4zM68 104h4v4h-4zM144 104h4v4h-4zM176 104h4v4h-4zM184 104h4v4h-4zM52 108h4v4h-4zM152 108h4v4h-4zM204 108h4v4h-4zM220 108h4v4h-4zM76 112h4v4h-4zM108 112h4v4h-4zM172 112h4v4h-4zM184 112h4v4h-4zM208 112h4v4h-4zM228 112h4v4h-4zM8 116h4v4h-4zM32 116h4v4h-4zM80 116h4v4h-4zM92 116h4v4h-4zM220 116h4v4h-4zM84 120h4v4h-4zM88 120h4v4h-4zM104 120h4v4h-4zM12 124h4v4h-4zM92 124h4v4h-4zM140 124h4v4h-4zM160 124h4v4h-4zM212 124h4v4h-4zM0 128h4v4h-4zM8 128h4v4h-4zM64 128h4v4h-4zM88 128h4v4h-4zM200 128h4v4h-4zM204 128h4v4h-4zM40 132h4v4h-4zM56 132h4v4h-4zM184 132h4v4h-4zM232 132h4v4h-4zM28 136h4v4h-4zM36 136h4v4h-4zM44 136h4v4h-4zM80 136h4v4h-4zM116 136h4v4h-4zM132 136h4v4h-4zM164 136h4v4h-4zM176 136h4v4h-4zM188 136h4v4h-4zM192 136h4v4h-4zM164 140h4v4h-4zM176 140h4v4h-4zM72 144h4v4h-4zM136 144h4v4h-4zM220 144h4v4h-4zM232 144h4v4h-4zM40 148h4v4h-4zM92 148h4v4h-4zM128 148h4v4h-4zM140 148h4v4h-4zM168 148h4v4h-4zM68 152h4v4h-4zM88 152h4v4h-4zM136 152h4v4h-4zM164 152h4v4h-4zM212 152h4v4h-4zM236 152h4v4h-4zM68 156h4v4h-4zM72 156h4v4h-4zM92 156h4v4h-4zM124 156h4v4h-4zM140 156h4v4h-4zM180 156h4v4h-4zM232 160h4v4h-4zM240 160h4v4h-4zM148 164h4v4h-4zM112 168h4v4h-4zM172 168h4v4h-4zM8 172h4v2h-4zM68 172h4v2h-4zM84 172h4v2h-4zM96 172h4v2h-4zM112 172h4v2h-4zM124 172h4v2h-4zM160 172h4v2h-4zM168 172h4v2h-4zM192 172h4v2h-4zM208 172h4v2h-4z"/><path fill="#f8f8f8" d="M4 0h4v4h-4zM24 0h4v4h-4zM32 0h4v4h-4zM40 0h4v4h-4zM60 0h4v4h-4zM112 0h4v4h-4zM152 0h4v4h-4zM180 0h4v4h-4zM212 0h4v4h-4zM216 0h4v4h-4zM56 4h4v4h-4zM72 4h4v4h-4zM80 4h4v4h-4zM100 4h4v4h-4zM108 4h4v4h-4zM132 4h4v4h-4zM156 4h4v4h-4zM176 4h4v4h-4zM180 4h4v4h-4zM188 4h4v4h-4zM208 4h4v4h-4zM220 4h4v4h-4zM236 4h4v4h-4zM4 8h4v4h-4zM100 8h4v4h-4zM104 8h4v4h-4zM168 8h4v4h-4zM176 8h4v4h-4zM204 8h4v4h-4zM212 8h4v4h-4zM224 8h4v4h-4zM80 12h4v4h-4zM88 12h4v4h-4zM188 12h4v4h-4zM220 12h4v4h-4zM0 16h4v4h-4zM40 16h4v4h-4zM112 16h4v4h-4zM120 16h4v4h-4zM4 20h4v4h-4zM36 20h4v4h-4zM40 20h4v4h-4zM48 20h4v4h-4zM60 20h4v4h-4zM140 20h4v4h-4zM152 20h4v4h-4zM228 20h4v4h-4zM88 24h4v4h-4zM120 24h4v4h-4zM220 24h4v4h-4zM12 28h4v4h-4zM48 28h4v4h-4zM112 28h4v4h-4zM124 28h4v4h-4zM132 28h4v4h-4zM136 28h4v4h-4zM164 28h4v4h-4zM236 28h4v4h-4zM240 28h4v4h-4zM76 32h4v4h-4zM104 32h4v4h-4zM132 32h4v4h-4zM224 32h4v4h-4zM32 36h4v4h-4zM44 36h4v4h-4zM88 36h4v4h-4zM136 36h4v4h-4zM140 36h4v4h-4zM228 36h4v4h-4zM60 40h4v4h-4zM68 40h4v4h-4zM72 44h4v4h-4zM100 44h4v4h-4zM236 44h4v4h-4zM16 48h4v4h-4zM20 48h4v4h-4zM132 48h4v4h-4zM92 52h4v4h-4zM128 52h4v4h-4zM140 52h4v4h-4zM160 52h4v4h-4zM212 52h4v4h-4zM232 52h4v4h-4zM32 56h4v4h-4zM48 56h4v4h-4zM56 56h4v4h-4zM116 56h4v4h-4zM128 56h4v4h-4zM148 56h4v4h-4zM176 56h4v4h-4zM216 56h4v4h-4zM224 56h4v4h-4zM0 60h4v4h-4zM4 60h4v4h-4zM8 60h4v4h-4zM116 60h4v4h-4zM152 60h4v4h-4zM160 60h4v4h-4zM4 64h4v4h-4zM12 64h4v4h-4zM100 64h4v4h-4zM132 64h4v4h-4zM192 64h4v4h-4zM240 64h4v4h-4zM4 68h4v4h-4zM28 68h4v4h-4zM88 68h4v4h-4zM120 68h4v4h-4zM128 68h4v4h-4zM148 68h4v4h-4zM180 68h4v4h-4zM184 68h4v4h-4zM24 72h4v4h-4zM80 72h4v4h-4zM88 72h4v4h-4zM96 72h4v4h-4zM148 72h4v4h-4zM224 72h4v4h-4zM12 76h4v4h-4zM84 76h4v4h-4zM120 76h4v4h-4zM148 76h4v4h-4zM172 76h4v4h-4zM188 76h4v4h-4zM232 76h4v4h-4zM236 76h4v4h-4zM36 80h4v4h-4zM40 80h4v4h-4zM44 80h4v4h-4zM84 80h4v4h-4zM104 80h4v4h-4zM112 80h4v4h-4zM156 80h4v4h-4zM204 80h4v4h-4zM8 84h4v4h-4zM44 84h4v4h-4zM52 84h4v4h-4zM56 84h4v4h-4zM104 84h4v4h-4zM148 84h4v4h-4zM204 84h4v4h-4zM0 88h4v4h-4zM40 88h4v4h-4zM64 88h4v4h-4zM124 88h4v4h-4zM128 88h4v4h-4zM172 88h4v4h-4zM64 92h4v4h-4zM88 92h4v4h-4zM92 92h4v4h-4zM108 92h4v4h-4zM192 92h4v4h-4zM44 96h4v4h-4zM172 96h4v4h-4zM180 96h4v4h-4zM236 96h4v4h-4zM24 100h4v4h-4zM36 100h4v4h-4zM64 100h4v4h-4zM72 100h4v4h-4zM76 100h4v4h-4zM88 100h4v4h-4zM120 100h4v4h-4zM176 100h4v4h-4zM64 104h4v4h-4zM76 104h4v4h-4zM100 104h4v4h-4zM232 104h4v4h-4zM36 108h4v4h-4zM76 108h4v4h-4zM92 108h4v4h-4zM100 108h4v4h-4zM180 108h4v4h-4zM184 108h4v4h-4zM188 108h4v4h-4zM64 112h4v4h-4zM84 112h4v4h-4zM92 112h4v4h-4zM192 112h4v4h-4zM216 112h4v4h-4zM56 116h4v4h-4zM176 116h4v4h-4zM184 116h4v4h-4zM196 116h4v4h-4zM208 116h4v4h-4zM216 116h4v4h-4zM64 120h4v4h-4zM176 120h4v4h-4zM196 120h4v4h-4zM200 120h4v4h-4zM96 124h4v4h-4zM176 124h4v4h-4zM200 124h4v4h-4zM44 128h4v4h-4zM80 128h4v4h-4zM124 132h4v4h-4zM128 132h4v4h-4zM148 132h4v4h-4zM180 136h4v4h-4zM120 140h4v4h-4zM136 140h4v4h-4zM184 140h4v4h-4zM192 140h4v4h-4zM208 140h4v4h-4zM44 144h4v4h-4zM116 144h4v4h-4zM120 144h4v4h-4zM140 144h4v4h-4zM184 144h4v4h-4zM192 144h4v4h-4zM200 144h4v4h-4zM88 148h4v4h-4zM180 148h4v4h-4zM192 148h4v4h-4zM204 148h4v4h-4zM208 148h4v4h-4zM216 148h4v4h-4zM4 152h4v4h-4zM12 152h4v4h-4zM36 152h4v4h-4zM52 152h4v4h-4zM168 152h4v4h-4zM200 152h4v4h-4zM216 152h4v4h-4zM220 152h4v4h-4zM0 156h4v4h-4zM12 156h4v4h-4zM16 156h4v4h-4zM28 156h4v4h-4zM32 156h4v4h-4zM36 156h4v4h-4zM48 156h4v4h-4zM184 156h4v4h-4zM196 156h4v4h-4zM60 160h4v4h-4zM180 160h4v4h-4zM192 160h4v4h-4zM196 160h4v4h-4zM200 160h4v4h-4zM212 160h4v4h-4zM236 160h4v4h-4zM0 164h4v4h-4zM196 164h4v4h-4zM200 164h4v4h-4zM204 164h4v4h-4zM220 164h4v4h-4zM4 168h4v4h-4zM28 168h4v4h-4zM60 168h4v4h-4zM64 168h4v4h-4zM80 168h4v4h-4zM144 168h4v4h-4zM184 168h4v4h-4zM200 168h4v4h-4zM32 172h4v2h-4zM80 172h4v2h-4zM92 172h4v2h-4zM228 172h4v2h-4zM240 172h4v2h-4z"/><path fill="#222" d="M8 0h4v4h-4zM12 0h4v4h-4zM16 0h4v4h-4zM28 0h4v4h-4zM80 0h4v4h-4zM88 0h4v4h-4zM184 0h4v4h-4zM188 0h4v4h-4zM28 4h4v4h-4zM68 4h4v4h-4zM88 4h4v4h-4zM152 4h4v4h-4zM16 8h4v4h-4zM40 8h4v4h-4zM60 8h4v4h-4zM72 8h4v4h-4zM84 8h4v4h-4zM116 8h4v4h-4zM132 8h4v4h-4zM192 8h4v4h-4zM48 12h4v4h-4zM76 12h4v4h-4zM8 16h4v4h-4zM56 16h4v4h-4zM68 16h4v4h-4zM144 16h4v4h-4zM152 16h4v4h-4zM156 16h4v4h-4zM220 16h4v4h-4zM8 20h4v4h-4zM56 20h4v4h-4zM72 20h4v4h-4zM84 20h4v4h-4zM132 20h4v4h-4zM164 20h4v4h-4zM116 24h4v4h-4zM156 24h4v4h-4zM168 24h4v4h-4zM144 28h4v4h-4zM8 32h4v4h-4zM28 32h4v4h-4zM140 32h4v4h-4zM164 32h4v4h-4zM12 36h4v4h-4zM108 36h4v4h-4zM128 36h4v4h-4zM180 36h4v4h-4zM220 36h4v4h-4zM240 36h4v4h-4zM40 40h4v4h-4zM128 40h4v4h-4zM144 40h4v4h-4zM192 40h4v4h-4zM224 40h4v4h-4zM0 44h4v4h-4zM96 44h4v4h-4zM104 44h4v4h-4zM224 44h4v4h-4zM240 44h4v4h-4zM32 48h4v4h-4zM36 48h4v4h-4zM112 48h4v4h-4zM152 48h4v4h-4zM176 48h4v4h-4zM192 48h4v4h-4zM228 48h4v4h-4zM232 48h4v4h-4zM16 52h4v4h-4zM40 52h4v4h-4zM64 52h4v4h-4zM152 52h4v4h-4zM188 52h4v4h-4zM204 52h4v4h-4zM220 52h4v4h-4zM224 52h4v4h-4zM236 52h4v4h-4zM40 56h4v4h-4zM80 56h4v4h-4zM120 56h4v4h-4zM156 56h4v4h-4zM12 60h4v4h-4zM64 60h4v4h-4zM96 60h4v4h-4zM196 60h4v4h-4zM232 60h4v4h-4zM236 60h4v4h-4zM0 64h4v4h-4zM80 64h4v4h-4zM148 64h4v4h-4zM204 64h4v4h-4zM228 64h4v4h-4zM168 68h4v4h-4zM204 68h4v4h-4zM236 68h4v4h-4zM4 72h4v4h-4zM116 72h4v4h-4zM132 72h4v4h-4zM136 72h4v4h-4zM156 72h4v4h-4zM132 76h4v4h-4zM140 76h4v4h-4zM176 76h4v4h-4zM184 76h4v4h-4zM196 76h4v4h-4zM200 76h4v4h-4zM48 80h4v4h-4zM124 80h4v4h-4zM136 80h4v4h-4zM216 80h4v4h-4zM64 84h4v4h-4zM68 84h4v4h-4zM108 84h4v4h-4zM116 84h4v4h-4zM120 84h4v4h-4zM140 84h4v4h-4zM196 84h4v4h-4zM240 84h4v4h-4zM52 88h4v4h-4zM76 88h4v4h-4zM84 88h4v4h-4zM136 88h4v4h-4zM200 88h4v4h-4zM204 88h4v4h-4zM20 92h4v4h-4zM48 92h4v4h-4zM68 92h4v4h-4zM84 92h4v4h-4zM128 92h4v4h-4zM148 92h4v4h-4zM20 96h4v4h-4zM36 96h4v4h-4zM148 96h4v4h-4zM168 96h4v4h-4zM100 100h4v4h-4zM108 100h4v4h-4zM132 100h4v4h-4zM184 100h4v4h-4zM164 104h4v4h-4zM172 104h4v4h-4zM192 104h4v4h-4zM216 104h4v4h-4zM48 108h4v4h-4zM64 108h4v4h-4zM96 108h4v4h-4zM136 108h4v4h-4zM192 108h4v4h-4zM236 108h4v4h-4zM8 112h4v4h-4zM32 112h4v4h-4zM52 112h4v4h-4zM124 112h4v4h-4zM196 112h4v4h-4zM232 112h4v4h-4zM64 116h4v4h-4zM112 116h4v4h-4zM192 116h4v4h-4zM200 116h4v4h-4zM236 116h4v4h-4zM36 120h4v4h-4zM52 120h4v4h-4zM80 120h4v4h-4zM92 120h4v4h-4zM136 120h4v4h-4zM168 120h4v4h-4zM180 120h4v4h-4zM192 120h4v4h-4zM208 120h4v4h-4zM16 124h4v4h-4zM132 124h4v4h-4zM216 124h4v4h-4zM236 124h4v4h-4zM84 128h4v4h-4zM96 128h4v4h-4zM152 128h4v4h-4zM188 128h4v4h-4zM232 128h4v4h-4zM240 128h4v4h-4zM8 132h4v4h-4zM52 132h4v4h-4zM68 132h4v4h-4zM80 132h4v4h-4zM132 132h4v4h-4zM136 132h4v4h-4zM176 132h4v4h-4zM200 132h4v4h-4zM236 132h4v4h-4zM52 136h4v4h-4zM84 136h4v4h-4zM92 136h4v4h-4zM140 136h4v4h-4zM28 140h4v4h-4zM36 140h4v4h-4zM56 140h4v4h-4zM68 140h4v4h-4zM168 140h4v4h-4zM228 140h4v4h-4zM16 144h4v4h-4zM36 144h4v4h-4zM40 144h4v4h-4zM64 144h4v4h-4zM128 144h4v4h-4zM164 144h4v4h-4zM0 148h4v4h-4zM12 148h4v4h-4zM44 148h4v4h-4zM116 148h4v4h-4zM148 148h4v4h-4zM152 148h4v4h-4zM40 152h4v4h-4zM60 152h4v4h-4zM160 152h4v4h-4zM228 152h4v4h-4zM112 156h4v4h-4zM120 156h4v4h-4zM152 156h4v4h-4zM236 156h4v4h-4zM76 160h4v4h-4zM100 160h4v4h-4zM128 160h4v4h-4zM164 160h4v4h-4zM40 164h4v4h-4zM72 164h4v4h-4zM84 164h4v4h-4zM124 164h4v4h-4zM140 164h4v4h-4zM152 164h4v4h-4zM156 164h4v4h-4zM68 168h4v4h-4zM92 168h4v4h-4zM152 168h4v4h-4zM228 168h4v4h-4zM88 172h4v2h-4zM100 172h4v2h-4zM108 172h4v2h-4zM152 172h4v2h-4zM164 172h4v2h-4zM184 172h4v2h-4zM220 172h4v2h-4z"/><path fill="#888888" d="M36 0h4v4h-4zM104 0h4v4h-4zM116 0h4v4h-4zM156 0h4v4h-4zM176 0h4v4h-4zM192 0h4v4h-4zM196 0h4v4h-4zM204 0h4v4h-4zM220 0h4v4h-4zM240 0h4v4h-4zM0 4h4v4h-4zM4 4h4v4h-4zM12 4h4v4h-4zM20 4h4v4h-4zM36 4h4v4h-4zM52 4h4v4h-4zM96 4h4v4h-4zM104 4h4v4h-4zM144 4h4v4h-4zM164 4h4v4h-4zM168 4h4v4h-4zM192 4h4v4h-4zM196 4h4v4h-4zM212 4h4v4h-4zM216 4h4v4h-4zM232 4h4v4h-4zM12 8h4v4h-4zM24 8h4v4h-4zM32 8h4v4h-4zM56 8h4v4h-4zM64 8h4v4h-4zM68 8h4v4h-4zM76 8h4v4h-4zM92 8h4v4h-4zM108 8h4v4h-4zM164 8h4v4h-4zM188 8h4v4h-4zM232 8h4v4h-4zM236 8h4v4h-4zM36 12h4v4h-4zM52 12h4v4h-4zM60 12h4v4h-4zM96 12h4v4h-4zM112 12h4v4h-4zM116 12h4v4h-4zM140 12h4v4h-4zM228 12h4v4h-4zM240 12h4v4h-4z"/><path fill="#2a6a6a" d="M44 0h4v4h-4zM48 0h4v4h-4zM52 0h4v4h-4zM64 0h4v4h-4zM68 0h4v4h-4zM72 0h4v4h-4zM76 0h4v4h-4z"/><path fill="#e0e0e0" d="M84 0h4v4h-4zM96 0h4v4h-4zM100 0h4v4h-4zM108 0h4v4h-4zM124 0h4v4h-4zM160 0h4v4h-4zM168 0h4v4h-4zM228 0h4v4h-4zM236 0h4v4h-4zM16 4h4v4h-4zM48 4h4v4h-4zM60 4h4v4h-4zM64 4h4v4h-4zM112 4h4v4h-4zM116 4h4v4h-4zM128 4h4v4h-4zM172 4h4v4h-4zM184 4h4v4h-4zM224 4h4v4h-4zM228 4h4v4h-4zM8 8h4v4h-4zM36 8h4v4h-4zM44 8h4v4h-4zM80 8h4v4h-4zM120 8h4v4h-4zM124 8h4v4h-4zM136 8h4v4h-4zM140 8h4v4h-4zM180 8h4v4h-4zM184 8h4v4h-4zM216 8h4v4h-4zM220 8h4v4h-4zM228 8h4v4h-4zM4 12h4v4h-4zM16 12h4v4h-4zM28 12h4v4h-4zM44 12h4v4h-4zM64 12h4v4h-4zM84 12h4v4h-4zM128 12h4v4h-4zM44 16h4v4h-4zM80 20h4v4h-4zM104 20h4v4h-4zM224 20h4v4h-4zM0 24h4v4h-4zM8 24h4v4h-4zM76 24h4v4h-4zM140 24h4v4h-4zM240 24h4v4h-4zM20 28h4v4h-4zM24 28h4v4h-4zM40 28h4v4h-4zM52 28h4v4h-4zM148 28h4v4h-4zM220 28h4v4h-4zM224 28h4v4h-4zM96 32h4v4h-4zM124 32h4v4h-4zM220 32h4v4h-4zM232 32h4v4h-4zM240 32h4v4h-4zM28 36h4v4h-4zM36 36h4v4h-4zM56 36h4v4h-4zM12 40h4v4h-4zM32 40h4v4h-4zM48 40h4v4h-4zM52 40h4v4h-4zM64 40h4v4h-4zM104 40h4v4h-4zM40 44h4v4h-4zM44 44h4v4h-4zM60 44h4v4h-4zM4 48h4v4h-4zM72 48h4v4h-4zM96 48h4v4h-4zM104 48h4v4h-4zM144 48h4v4h-4zM164 48h4v4h-4zM8 52h4v4h-4zM88 52h4v4h-4zM132 52h4v4h-4zM0 56h4v4h-4zM152 56h4v4h-4zM160 56h4v4h-4zM40 60h4v4h-4zM48 60h4v4h-4zM124 60h4v4h-4zM8 64h4v4h-4zM48 64h4v4h-4zM88 64h4v4h-4zM120 64h4v4h-4zM124 64h4v4h-4zM56 68h4v4h-4zM92 68h4v4h-4zM140 68h4v4h-4zM160 68h4v4h-4zM176 68h4v4h-4zM36 72h4v4h-4zM44 72h4v4h-4zM76 72h4v4h-4zM92 72h4v4h-4zM200 72h4v4h-4zM216 72h4v4h-4zM232 72h4v4h-4zM0 76h4v4h-4zM48 76h4v4h-4zM56 76h4v4h-4zM80 76h4v4h-4zM100 76h4v4h-4zM124 76h4v4h-4zM16 80h4v4h-4zM52 80h4v4h-4zM96 80h4v4h-4zM168 80h4v4h-4zM180 80h4v4h-4zM188 80h4v4h-4zM228 80h4v4h-4zM4 84h4v4h-4zM40 84h4v4h-4zM48 84h4v4h-4zM60 84h4v4h-4zM76 84h4v4h-4zM88 84h4v4h-4zM128 84h4v4h-4zM208 84h4v4h-4zM212 84h4v4h-4zM236 84h4v4h-4zM4 88h4v4h-4zM28 88h4v4h-4zM92 88h4v4h-4zM140 88h4v4h-4zM152 88h4v4h-4zM0 92h4v4h-4zM104 92h4v4h-4zM116 92h4v4h-4zM132 92h4v4h-4zM152 92h4v4h-4zM164 92h4v4h-4zM168 92h4v4h-4zM196 92h4v4h-4zM48 96h4v4h-4zM76 96h4v4h-4zM92 96h4v4h-4zM96 96h4v4h-4zM104 96h4v4h-4zM156 96h4v4h-4zM160 96h4v4h-4zM164 96h4v4h-4zM184 96h4v4h-4zM92 100h4v4h-4zM160 100h4v4h-4zM192 100h4v4h-4zM196 100h4v4h-4zM4 104h4v4h-4zM48 104h4v4h-4zM56 104h4v4h-4zM80 104h4v4h-4zM112 104h4v4h-4zM168 104h4v4h-4zM208 104h4v4h-4zM80 108h4v4h-4zM156 108h4v4h-4zM160 108h4v4h-4zM128 112h4v4h-4zM148 112h4v4h-4zM220 112h4v4h-4zM20 116h4v4h-4zM36 116h4v4h-4zM76 116h4v4h-4zM84 116h4v4h-4zM164 116h4v4h-4zM168 116h4v4h-4zM204 116h4v4h-4zM240 116h4v4h-4zM56 120h4v4h-4zM160 120h4v4h-4zM172 120h4v4h-4zM232 120h4v4h-4zM36 124h4v4h-4zM56 124h4v4h-4zM76 124h4v4h-4zM80 124h4v4h-4zM84 124h4v4h-4zM112 124h4v4h-4zM168 124h4v4h-4zM180 124h4v4h-4zM184 124h4v4h-4zM224 124h4v4h-4zM240 124h4v4h-4zM48 128h4v4h-4zM216 128h4v4h-4zM112 132h4v4h-4zM116 132h4v4h-4zM68 136h4v4h-4zM8 140h4v4h-4zM116 140h4v4h-4zM124 140h4v4h-4zM188 140h4v4h-4zM196 140h4v4h-4zM216 140h4v4h-4zM236 140h4v4h-4zM48 144h4v4h-4zM56 144h4v4h-4zM104 144h4v4h-4zM148 144h4v4h-4zM180 144h4v4h-4zM188 144h4v4h-4zM208 144h4v4h-4zM4 148h4v4h-4zM48 148h4v4h-4zM56 148h4v4h-4zM188 148h4v4h-4zM196 148h4v4h-4zM212 148h4v4h-4zM224 148h4v4h-4zM32 152h4v4h-4zM104 152h4v4h-4zM180 152h4v4h-4zM184 152h4v4h-4zM188 152h4v4h-4zM208 152h4v4h-4zM224 152h4v4h-4zM24 156h4v4h-4zM164 156h4v4h-4zM188 156h4v4h-4zM216 156h4v4h-4zM220 156h4v4h-4zM4 160h4v4h-4zM20 160h4v4h-4zM136 160h4v4h-4zM156 160h4v4h-4zM172 160h4v4h-4zM188 160h4v4h-4zM204 160h4v4h-4zM216 160h4v4h-4zM220 160h4v4h-4zM4 164h4v4h-4zM32 164h4v4h-4zM44 164h4v4h-4zM176 164h4v4h-4zM184 164h4v4h-4zM212 164h4v4h-4zM236 164h4v4h-4zM240 164h4v4h-4zM0 168h4v4h-4zM16 168h4v4h-4zM32 168h4v4h-4zM132 168h4v4h-4zM136 168h4v4h-4zM156 168h4v4h-4zM188 168h4v4h-4zM204 168h4v4h-4zM236 168h4v4h-4zM16 172h4v2h-4zM52 172h4v2h-4zM120 172h4v2h-4zM136 172h4v2h-4zM148 172h4v2h-4zM212 172h4v2h-4zM224 172h4v2h-4z"/><path fill="#f0f0f0" d="M120 0h4v4h-4zM132 0h4v4h-4zM124 4h4v4h-4zM128 8h4v4h-4zM120 12h4v4h-4zM124 12h4v4h-4zM132 12h4v4h-4zM4 92h4v4h-4zM8 92h4v4h-4zM12 92h4v4h-4zM16 92h4v4h-4zM24 92h4v4h-4zM28 92h4v4h-4zM32 92h4v4h-4zM0 96h4v4h-4zM8 96h4v4h-4zM12 96h4v4h-4zM16 96h4v4h-4zM24 96h4v4h-4zM28 96h4v4h-4zM4 100h4v4h-4zM12 100h4v4h-4zM16 100h4v4h-4zM20 100h4v4h-4z"/><path fill="#a0a0a0" d="M128 0h4v4h-4zM140 4h4v4h-4zM160 4h4v4h-4zM28 8h4v4h-4zM204 12h4v4h-4zM44 24h4v4h-4zM164 24h4v4h-4zM232 24h4v4h-4zM88 32h4v4h-4zM84 40h4v4h-4zM80 44h4v4h-4zM204 44h4v4h-4zM208 44h4v4h-4zM200 48h4v4h-4zM132 56h4v4h-4zM188 56h4v4h-4zM200 56h4v4h-4zM120 60h4v4h-4zM84 64h4v4h-4zM96 64h4v4h-4zM136 64h4v4h-4zM0 68h4v4h-4zM48 68h4v4h-4zM212 72h4v4h-4zM204 76h4v4h-4zM224 76h4v4h-4zM20 80h4v4h-4zM88 88h4v4h-4zM188 88h4v4h-4zM136 92h4v4h-4zM188 92h4v4h-4zM40 96h4v4h-4zM56 96h4v4h-4zM144 96h4v4h-4zM44 100h4v4h-4zM212 100h4v4h-4zM132 104h4v4h-4zM24 108h4v4h-4zM56 108h4v4h-4zM176 108h4v4h-4zM164 112h4v4h-4zM0 120h4v4h-4zM88 124h4v4h-4zM220 124h4v4h-4zM156 128h4v4h-4zM188 132h4v4h-4zM64 136h4v4h-4zM240 136h4v4h-4zM212 140h4v4h-4zM32 144h4v4h-4zM100 148h4v4h-4zM156 152h4v4h-4zM8 160h4v4h-4zM160 160h4v4h-4zM180 164h4v4h-4zM52 168h4v4h-4zM76 168h4v4h-4zM116 172h4v2h-4zM144 172h4v2h-4z"/><path fill="#1a1a22" d="M140 0h4v4h-4zM144 0h4v4h-4zM148 0h4v4h-4zM164 0h4v4h-4zM200 0h4v4h-4zM208 0h4v4h-4zM232 0h4v4h-4zM8 4h4v4h-4zM32 4h4v4h-4zM40 4h4v4h-4zM44 4h4v4h-4zM120 4h4v4h-4zM136 4h4v4h-4zM204 4h4v4h-4zM240 4h4v4h-4zM20 8h4v4h-4zM112 8h4v4h-4zM160 8h4v4h-4zM172 8h4v4h-4zM240 8h4v4h-4zM56 12h4v4h-4zM68 12h4v4h-4zM72 12h4v4h-4zM100 12h4v4h-4zM216 12h4v4h-4zM96 16h4v4h-4zM100 16h4v4h-4zM116 16h4v4h-4zM124 16h4v4h-4zM128 16h4v4h-4zM16 20h4v4h-4zM112 20h4v4h-4zM116 20h4v4h-4zM136 20h4v4h-4zM160 20h4v4h-4zM232 20h4v4h-4zM12 24h4v4h-4zM32 24h4v4h-4zM36 24h4v4h-4zM72 24h4v4h-4zM80 24h4v4h-4zM144 24h4v4h-4zM160 24h4v4h-4zM4 28h4v4h-4zM128 28h4v4h-4zM152 28h4v4h-4zM172 28h4v4h-4zM184 28h4v4h-4zM212 28h4v4h-4zM4 32h4v4h-4zM32 32h4v4h-4zM52 32h4v4h-4zM108 32h4v4h-4zM112 32h4v4h-4zM148 32h4v4h-4zM8 36h4v4h-4zM72 36h4v4h-4zM104 36h4v4h-4zM112 36h4v4h-4zM148 36h4v4h-4zM156 36h4v4h-4zM164 36h4v4h-4zM172 36h4v4h-4zM236 36h4v4h-4zM16 40h4v4h-4zM140 40h4v4h-4zM152 40h4v4h-4zM176 40h4v4h-4zM216 40h4v4h-4zM228 40h4v4h-4zM16 44h4v4h-4zM76 44h4v4h-4zM136 44h4v4h-4zM152 44h4v4h-4zM160 44h4v4h-4zM220 44h4v4h-4zM228 44h4v4h-4zM8 48h4v4h-4zM64 48h4v4h-4zM92 48h4v4h-4zM0 52h4v4h-4zM20 52h4v4h-4zM68 52h4v4h-4zM240 52h4v4h-4zM4 56h4v4h-4zM12 56h4v4h-4zM64 56h4v4h-4zM76 56h4v4h-4zM88 56h4v4h-4zM136 56h4v4h-4zM16 60h4v4h-4zM136 60h4v4h-4zM148 60h4v4h-4zM172 60h4v4h-4zM180 60h4v4h-4zM204 60h4v4h-4zM16 64h4v4h-4zM32 64h4v4h-4zM104 64h4v4h-4zM128 64h4v4h-4zM140 64h4v4h-4zM160 64h4v4h-4zM188 64h4v4h-4zM196 64h4v4h-4zM40 68h4v4h-4zM68 68h4v4h-4zM124 68h4v4h-4zM136 68h4v4h-4zM208 72h4v4h-4zM144 76h4v4h-4zM160 76h4v4h-4zM216 76h4v4h-4zM80 80h4v4h-4zM176 80h4v4h-4zM184 80h4v4h-4zM28 84h4v4h-4zM100 84h4v4h-4zM132 84h4v4h-4zM136 84h4v4h-4zM216 84h4v4h-4zM12 88h4v4h-4zM68 88h4v4h-4zM212 88h4v4h-4zM228 88h4v4h-4zM60 92h4v4h-4zM124 92h4v4h-4zM144 92h4v4h-4zM156 92h4v4h-4zM68 96h4v4h-4zM72 96h4v4h-4zM112 96h4v4h-4zM128 96h4v4h-4zM140 96h4v4h-4zM232 96h4v4h-4zM8 100h4v4h-4zM56 100h4v4h-4zM80 100h4v4h-4zM136 100h4v4h-4zM140 100h4v4h-4zM72 104h4v4h-4zM92 104h4v4h-4zM96 104h4v4h-4zM104 104h4v4h-4zM152 104h4v4h-4zM212 104h4v4h-4zM240 104h4v4h-4zM60 108h4v4h-4zM68 108h4v4h-4zM124 108h4v4h-4zM128 108h4v4h-4zM224 108h4v4h-4zM56 112h4v4h-4zM68 112h4v4h-4zM72 112h4v4h-4zM96 112h4v4h-4zM112 112h4v4h-4zM132 112h4v4h-4zM176 112h4v4h-4zM108 116h4v4h-4zM180 116h4v4h-4zM228 116h4v4h-4zM72 120h4v4h-4zM152 120h4v4h-4zM156 120h4v4h-4zM184 120h4v4h-4zM188 120h4v4h-4zM240 120h4v4h-4zM52 124h4v4h-4zM68 124h4v4h-4zM108 124h4v4h-4zM152 124h4v4h-4zM68 128h4v4h-4zM104 128h4v4h-4zM124 128h4v4h-4zM132 128h4v4h-4zM144 128h4v4h-4zM176 128h4v4h-4zM48 132h4v4h-4zM172 132h4v4h-4zM196 132h4v4h-4zM224 132h4v4h-4zM228 132h4v4h-4zM48 136h4v4h-4zM112 136h4v4h-4zM120 136h4v4h-4zM184 136h4v4h-4zM204 136h4v4h-4zM148 140h4v4h-4zM232 140h4v4h-4zM20 144h4v4h-4zM144 144h4v4h-4zM240 144h4v4h-4zM24 148h4v4h-4zM36 148h4v4h-4zM52 148h4v4h-4zM72 148h4v4h-4zM76 148h4v4h-4zM112 148h4v4h-4zM124 148h4v4h-4zM172 148h4v4h-4zM84 152h4v4h-4zM108 152h4v4h-4zM120 152h4v4h-4zM176 152h4v4h-4zM96 156h4v4h-4zM144 156h4v4h-4zM160 156h4v4h-4zM172 156h4v4h-4zM240 156h4v4h-4zM64 160h4v4h-4zM84 160h4v4h-4zM144 160h4v4h-4zM168 160h4v4h-4zM88 164h4v4h-4zM112 164h4v4h-4zM120 164h4v4h-4zM224 164h4v4h-4zM228 164h4v4h-4zM48 168h4v4h-4zM108 168h4v4h-4zM160 168h4v4h-4zM36 172h4v2h-4zM40 172h4v2h-4zM48 172h4v2h-4zM64 172h4v2h-4zM72 172h4v2h-4zM104 172h4v2h-4zM140 172h4v2h-4zM156 172h4v2h-4z"/><path fill="#777" d="M200 4h4v4h-4zM48 8h4v4h-4zM52 8h4v4h-4zM96 8h4v4h-4zM208 8h4v4h-4zM132 16h4v4h-4zM228 16h4v4h-4zM136 24h4v4h-4zM172 24h4v4h-4zM232 36h4v4h-4zM28 40h4v4h-4zM80 40h4v4h-4zM108 40h4v4h-4zM204 40h4v4h-4zM56 44h4v4h-4zM144 52h4v4h-4zM32 60h4v4h-4zM44 60h4v4h-4zM128 60h4v4h-4zM188 60h4v4h-4zM52 64h4v4h-4zM184 64h4v4h-4zM208 64h4v4h-4zM72 68h4v4h-4zM12 72h4v4h-4zM100 72h4v4h-4zM164 76h4v4h-4zM220 76h4v4h-4zM72 80h4v4h-4zM192 84h4v4h-4zM80 96h4v4h-4zM0 100h4v4h-4zM96 100h4v4h-4zM172 100h4v4h-4zM72 108h4v4h-4zM148 108h4v4h-4zM228 108h4v4h-4zM4 112h4v4h-4zM168 112h4v4h-4zM156 116h4v4h-4zM64 124h4v4h-4zM100 128h4v4h-4zM84 132h4v4h-4zM4 136h4v4h-4zM56 136h4v4h-4zM24 144h4v4h-4zM88 144h4v4h-4zM96 144h4v4h-4zM228 144h4v4h-4zM48 152h4v4h-4zM44 156h4v4h-4zM168 156h4v4h-4zM124 160h4v4h-4zM148 160h4v4h-4zM80 164h4v4h-4zM208 164h4v4h-4zM196 168h4v4h-4z"/><path fill="#204a30" d="M144 8h4v4h-4zM148 8h4v4h-4zM156 8h4v4h-4zM152 12h4v4h-4zM156 12h4v4h-4zM160 16h4v4h-4zM144 20h4v4h-4zM148 20h4v4h-4zM156 20h4v4h-4zM148 24h4v4h-4zM152 24h4v4h-4zM156 28h4v4h-4zM160 28h4v4h-4zM144 32h4v4h-4zM152 32h4v4h-4zM156 32h4v4h-4zM160 32h4v4h-4zM144 36h4v4h-4zM152 36h4v4h-4zM160 36h4v4h-4z"/><path fill="#d02030" d="M12 12h4v4h-4zM20 12h4v4h-4zM24 12h4v4h-4zM12 16h4v4h-4zM16 16h4v4h-4zM20 16h4v4h-4zM24 16h4v4h-4zM28 16h4v4h-4zM12 20h4v4h-4zM20 20h4v4h-4zM24 20h4v4h-4zM28 20h4v4h-4zM16 24h4v4h-4zM24 24h4v4h-4zM28 24h4v4h-4z"/><path fill="#c8a030" d="M168 12h4v4h-4zM172 12h4v4h-4zM176 12h4v4h-4zM180 12h4v4h-4zM184 12h4v4h-4zM192 12h4v4h-4zM196 12h4v4h-4zM200 12h4v4h-4zM208 12h4v4h-4zM212 12h4v4h-4zM172 16h4v4h-4zM176 16h4v4h-4zM180 16h4v4h-4zM184 16h4v4h-4zM188 16h4v4h-4zM192 16h4v4h-4zM196 16h4v4h-4zM204 16h4v4h-4zM208 16h4v4h-4zM212 16h4v4h-4zM168 20h4v4h-4zM172 20h4v4h-4zM176 20h4v4h-4zM180 20h4v4h-4zM184 20h4v4h-4zM188 20h4v4h-4zM192 20h4v4h-4zM200 20h4v4h-4zM204 20h4v4h-4zM208 20h4v4h-4zM212 20h4v4h-4zM176 24h4v4h-4zM180 24h4v4h-4zM184 24h4v4h-4zM188 24h4v4h-4zM192 24h4v4h-4zM196 24h4v4h-4zM200 24h4v4h-4zM204 24h4v4h-4zM208 24h4v4h-4zM168 28h4v4h-4zM176 28h4v4h-4zM180 28h4v4h-4zM188 28h4v4h-4zM192 28h4v4h-4zM200 28h4v4h-4zM204 28h4v4h-4zM208 28h4v4h-4zM168 32h4v4h-4zM176 32h4v4h-4zM180 32h4v4h-4zM188 32h4v4h-4zM192 32h4v4h-4zM196 32h4v4h-4zM200 32h4v4h-4zM204 32h4v4h-4zM208 32h4v4h-4zM212 32h4v4h-4zM168 36h4v4h-4zM176 36h4v4h-4zM184 36h4v4h-4zM188 36h4v4h-4zM192 36h4v4h-4zM196 36h4v4h-4zM200 36h4v4h-4zM204 36h4v4h-4zM168 40h4v4h-4zM172 40h4v4h-4zM180 40h4v4h-4zM184 40h4v4h-4zM188 40h4v4h-4zM196 40h4v4h-4zM200 40h4v4h-4zM168 44h4v4h-4zM172 44h4v4h-4zM180 44h4v4h-4zM184 44h4v4h-4zM188 44h4v4h-4zM192 44h4v4h-4zM196 44h4v4h-4zM200 44h4v4h-4zM168 48h4v4h-4zM172 48h4v4h-4zM184 48h4v4h-4zM196 48h4v4h-4zM172 52h4v4h-4zM176 52h4v4h-4zM180 52h4v4h-4zM184 52h4v4h-4zM192 52h4v4h-4zM200 52h4v4h-4zM168 56h4v4h-4zM172 56h4v4h-4zM180 56h4v4h-4zM184 56h4v4h-4zM192 56h4v4h-4zM196 56h4v4h-4zM204 56h4v4h-4zM168 60h4v4h-4zM176 60h4v4h-4zM184 60h4v4h-4zM208 60h4v4h-4zM212 60h4v4h-4z"/><path fill="#5a5a6a" d="M236 12h4v4h-4zM168 16h4v4h-4zM200 16h4v4h-4zM236 16h4v4h-4zM196 20h4v4h-4zM240 20h4v4h-4zM212 24h4v4h-4zM92 28h4v4h-4zM16 36h4v4h-4zM52 36h4v4h-4zM76 36h4v4h-4zM24 44h4v4h-4zM176 44h4v4h-4zM136 48h4v4h-4zM160 48h4v4h-4zM204 48h4v4h-4zM96 52h4v4h-4zM116 52h4v4h-4zM196 52h4v4h-4zM56 60h4v4h-4zM68 64h4v4h-4zM44 68h4v4h-4zM112 68h4v4h-4zM228 72h4v4h-4zM48 88h4v4h-4zM232 88h4v4h-4zM120 92h4v4h-4zM4 96h4v4h-4zM116 96h4v4h-4zM28 100h4v4h-4zM48 100h4v4h-4zM124 100h4v4h-4zM140 104h4v4h-4zM36 112h4v4h-4zM156 112h4v4h-4zM160 112h4v4h-4zM136 116h4v4h-4zM4 120h4v4h-4zM116 124h4v4h-4zM148 124h4v4h-4zM136 128h4v4h-4zM220 128h4v4h-4zM0 132h4v4h-4zM108 132h4v4h-4zM12 136h4v4h-4zM196 136h4v4h-4zM108 140h4v4h-4zM156 140h4v4h-4zM196 144h4v4h-4zM132 148h4v4h-4zM200 156h4v4h-4zM228 160h4v4h-4zM52 164h4v4h-4zM180 168h4v4h-4zM4 172h4v2h-4zM56 172h4v2h-4zM216 172h4v2h-4z"/><path fill="#303034" d="M4 16h4v4h-4zM32 16h4v4h-4zM36 16h4v4h-4zM48 16h4v4h-4zM52 16h4v4h-4zM60 16h4v4h-4zM72 16h4v4h-4zM76 16h4v4h-4zM80 16h4v4h-4zM88 16h4v4h-4zM104 16h4v4h-4zM108 16h4v4h-4zM164 16h4v4h-4zM216 16h4v4h-4zM224 16h4v4h-4zM232 16h4v4h-4zM240 16h4v4h-4zM32 20h4v4h-4zM44 20h4v4h-4zM52 20h4v4h-4zM64 20h4v4h-4zM76 20h4v4h-4zM92 20h4v4h-4zM96 20h4v4h-4zM108 20h4v4h-4zM120 20h4v4h-4zM128 20h4v4h-4zM40 24h4v4h-4zM48 24h4v4h-4zM52 24h4v4h-4zM56 24h4v4h-4zM124 24h4v4h-4zM132 24h4v4h-4zM28 28h4v4h-4zM32 28h4v4h-4zM44 28h4v4h-4zM56 28h4v4h-4zM140 28h4v4h-4zM216 28h4v4h-4zM40 32h4v4h-4zM128 32h4v4h-4zM136 32h4v4h-4zM216 32h4v4h-4zM0 36h4v4h-4zM4 36h4v4h-4zM40 36h4v4h-4zM124 40h4v4h-4zM132 40h4v4h-4zM136 40h4v4h-4zM156 40h4v4h-4zM160 40h4v4h-4zM164 40h4v4h-4zM144 44h4v4h-4zM148 44h4v4h-4zM156 44h4v4h-4zM164 44h4v4h-4zM148 48h4v4h-4zM156 48h4v4h-4zM156 52h4v4h-4zM164 52h4v4h-4zM228 52h4v4h-4zM144 56h4v4h-4zM164 56h4v4h-4zM144 60h4v4h-4zM156 60h4v4h-4zM164 60h4v4h-4zM216 60h4v4h-4zM144 64h4v4h-4zM152 64h4v4h-4zM156 64h4v4h-4zM164 64h4v4h-4zM176 64h4v4h-4zM212 64h4v4h-4zM216 64h4v4h-4zM144 68h4v4h-4zM152 68h4v4h-4zM156 68h4v4h-4zM164 68h4v4h-4zM208 68h4v4h-4zM212 68h4v4h-4zM216 68h4v4h-4zM0 72h4v4h-4zM144 72h4v4h-4zM152 72h4v4h-4zM188 72h4v4h-4zM192 72h4v4h-4zM196 72h4v4h-4zM204 72h4v4h-4zM4 76h4v4h-4zM152 76h4v4h-4zM208 76h4v4h-4zM212 76h4v4h-4zM0 80h4v4h-4zM4 80h4v4h-4zM144 80h4v4h-4zM148 80h4v4h-4zM196 80h4v4h-4zM200 80h4v4h-4zM208 80h4v4h-4zM152 84h4v4h-4zM184 84h4v4h-4zM188 84h4v4h-4zM200 84h4v4h-4zM148 88h4v4h-4zM184 88h4v4h-4zM192 88h4v4h-4zM196 88h4v4h-4zM208 88h4v4h-4zM216 88h4v4h-4zM56 92h4v4h-4zM172 92h4v4h-4zM180 92h4v4h-4zM52 96h4v4h-4zM60 96h4v4h-4zM64 96h4v4h-4zM152 96h4v4h-4zM176 96h4v4h-4zM188 96h4v4h-4zM192 96h4v4h-4zM240 96h4v4h-4zM40 100h4v4h-4zM52 100h4v4h-4zM68 100h4v4h-4zM144 100h4v4h-4zM148 100h4v4h-4zM152 100h4v4h-4zM168 100h4v4h-4zM188 100h4v4h-4zM232 100h4v4h-4zM60 104h4v4h-4zM180 104h4v4h-4zM188 104h4v4h-4zM196 104h4v4h-4zM236 104h4v4h-4zM196 108h4v4h-4zM232 108h4v4h-4zM240 108h4v4h-4zM48 112h4v4h-4zM60 112h4v4h-4zM180 112h4v4h-4zM188 112h4v4h-4zM200 112h4v4h-4zM48 116h4v4h-4zM52 116h4v4h-4zM60 116h4v4h-4zM68 116h4v4h-4zM188 116h4v4h-4zM48 120h4v4h-4zM60 120h4v4h-4zM68 120h4v4h-4zM76 120h4v4h-4zM96 120h4v4h-4zM48 124h4v4h-4zM60 124h4v4h-4zM72 124h4v4h-4zM188 124h4v4h-4zM192 124h4v4h-4zM196 124h4v4h-4zM192 128h4v4h-4zM196 128h4v4h-4zM148 136h4v4h-4zM224 144h4v4h-4zM220 148h4v4h-4zM228 148h4v4h-4zM148 152h4v4h-4zM152 152h4v4h-4zM172 152h4v4h-4zM148 156h4v4h-4zM156 156h4v4h-4zM176 156h4v4h-4zM224 156h4v4h-4zM228 156h4v4h-4zM152 160h4v4h-4zM176 160h4v4h-4zM160 164h4v4h-4zM164 164h4v4h-4zM168 164h4v4h-4zM172 164h4v4h-4zM124 168h4v4h-4zM128 168h4v4h-4zM140 168h4v4h-4zM148 168h4v4h-4zM164 168h4v4h-4zM168 168h4v4h-4zM176 168h4v4h-4zM220 168h4v4h-4zM0 172h4v2h-4zM12 172h4v2h-4zM20 172h4v2h-4zM24 172h4v2h-4zM28 172h4v2h-4zM44 172h4v2h-4zM60 172h4v2h-4zM76 172h4v2h-4zM128 172h4v2h-4zM132 172h4v2h-4zM172 172h4v2h-4zM176 172h4v2h-4zM180 172h4v2h-4zM188 172h4v2h-4zM196 172h4v2h-4zM200 172h4v2h-4zM204 172h4v2h-4zM232 172h4v2h-4zM236 172h4v2h-4z"/><path fill="#e08030" d="M0 20h4v4h-4zM4 24h4v4h-4zM0 28h4v4h-4zM8 28h4v4h-4z"/><path fill="#f4f4f4" d="M220 20h4v4h-4zM236 20h4v4h-4zM224 24h4v4h-4zM228 24h4v4h-4zM236 24h4v4h-4zM228 28h4v4h-4zM232 28h4v4h-4zM236 32h4v4h-4z"/><path fill="#8a5a2a" d="M64 24h4v4h-4zM84 24h4v4h-4zM92 24h4v4h-4zM96 24h4v4h-4zM100 24h4v4h-4zM104 24h4v4h-4zM108 24h4v4h-4zM112 24h4v4h-4zM68 28h4v4h-4zM72 28h4v4h-4zM76 28h4v4h-4zM80 28h4v4h-4zM84 28h4v4h-4zM88 28h4v4h-4zM96 28h4v4h-4zM108 28h4v4h-4zM116 28h4v4h-4zM120 28h4v4h-4zM60 32h4v4h-4zM64 32h4v4h-4zM68 32h4v4h-4zM72 32h4v4h-4zM80 32h4v4h-4zM84 32h4v4h-4zM92 32h4v4h-4zM100 32h4v4h-4zM116 32h4v4h-4zM60 36h4v4h-4zM64 36h4v4h-4zM80 36h4v4h-4zM92 36h4v4h-4zM96 36h4v4h-4zM100 36h4v4h-4zM116 36h4v4h-4zM72 40h4v4h-4zM116 40h4v4h-4zM120 40h4v4h-4zM64 44h4v4h-4zM68 44h4v4h-4zM108 44h4v4h-4zM112 44h4v4h-4zM116 44h4v4h-4zM60 48h4v4h-4zM68 48h4v4h-4zM108 48h4v4h-4zM116 48h4v4h-4zM72 52h4v4h-4zM104 52h4v4h-4zM108 52h4v4h-4zM112 52h4v4h-4zM60 56h4v4h-4zM104 56h4v4h-4zM68 60h4v4h-4zM104 60h4v4h-4z"/><path fill="#c02050" d="M12 32h4v4h-4zM20 32h4v4h-4zM24 32h4v4h-4zM20 36h4v4h-4zM24 36h4v4h-4z"/><path fill="#3070c0" d="M48 32h4v4h-4zM56 32h4v4h-4zM48 36h4v4h-4zM56 40h4v4h-4zM52 44h4v4h-4zM44 48h4v4h-4zM48 48h4v4h-4zM52 48h4v4h-4zM56 48h4v4h-4zM44 52h4v4h-4zM48 52h4v4h-4zM52 52h4v4h-4zM56 52h4v4h-4zM44 56h4v4h-4zM52 56h4v4h-4zM52 60h4v4h-4zM44 64h4v4h-4zM60 64h4v4h-4zM64 64h4v4h-4zM52 68h4v4h-4zM48 72h4v4h-4zM52 72h4v4h-4zM44 76h4v4h-4zM52 76h4v4h-4zM44 88h4v4h-4z"/><path fill="#e05030" d="M208 36h4v4h-4zM212 36h4v4h-4zM208 40h4v4h-4zM212 40h4v4h-4zM212 44h4v4h-4zM208 48h4v4h-4zM212 48h4v4h-4zM208 52h4v4h-4zM208 56h4v4h-4zM212 56h4v4h-4z"/><path fill="#40a080" d="M216 36h4v4h-4zM224 36h4v4h-4zM216 44h4v4h-4zM232 44h4v4h-4zM216 48h4v4h-4zM220 48h4v4h-4zM224 48h4v4h-4z"/><path fill="#2a3a2a" d="M0 40h4v4h-4zM8 40h4v4h-4zM24 40h4v4h-4zM36 40h4v4h-4zM4 44h4v4h-4zM8 44h4v4h-4zM12 44h4v4h-4zM20 44h4v4h-4zM28 44h4v4h-4zM32 44h4v4h-4zM0 48h4v4h-4zM12 48h4v4h-4zM24 48h4v4h-4zM28 48h4v4h-4zM40 48h4v4h-4zM4 52h4v4h-4zM24 52h4v4h-4zM28 52h4v4h-4zM32 52h4v4h-4z"/><path fill="#d0a040" d="M76 40h4v4h-4zM92 40h4v4h-4zM100 40h4v4h-4zM84 44h4v4h-4zM88 44h4v4h-4zM76 48h4v4h-4zM84 48h4v4h-4zM100 48h4v4h-4zM76 52h4v4h-4zM84 52h4v4h-4zM100 52h4v4h-4zM84 56h4v4h-4zM92 56h4v4h-4zM96 56h4v4h-4zM100 56h4v4h-4zM76 60h4v4h-4zM80 60h4v4h-4zM84 60h4v4h-4zM88 60h4v4h-4zM92 60h4v4h-4zM100 60h4v4h-4z"/><path fill="#d8c040" d="M236 40h4v4h-4zM240 40h4v4h-4zM236 48h4v4h-4zM240 48h4v4h-4zM236 56h4v4h-4zM240 56h4v4h-4zM240 60h4v4h-4zM236 64h4v4h-4zM240 68h4v4h-4z"/><path fill="#3a3a3a" d="M124 44h4v4h-4zM128 44h4v4h-4zM132 44h4v4h-4zM124 48h4v4h-4zM140 48h4v4h-4zM120 52h4v4h-4zM124 52h4v4h-4zM136 52h4v4h-4zM124 56h4v4h-4zM140 56h4v4h-4zM132 60h4v4h-4zM140 60h4v4h-4zM132 68h4v4h-4zM140 72h4v4h-4zM128 76h4v4h-4zM136 76h4v4h-4zM120 80h4v4h-4zM128 80h4v4h-4zM132 80h4v4h-4zM140 80h4v4h-4zM132 88h4v4h-4zM140 92h4v4h-4zM120 96h4v4h-4zM124 96h4v4h-4zM132 96h4v4h-4zM136 96h4v4h-4zM128 100h4v4h-4z"/><path fill="#70a030" d="M8 56h4v4h-4zM16 56h4v4h-4zM20 56h4v4h-4zM24 56h4v4h-4zM28 56h4v4h-4zM36 56h4v4h-4zM24 60h4v4h-4zM28 60h4v4h-4zM20 64h4v4h-4zM24 64h4v4h-4zM28 64h4v4h-4zM36 64h4v4h-4zM40 64h4v4h-4zM8 68h4v4h-4zM12 68h4v4h-4zM16 68h4v4h-4zM20 68h4v4h-4zM24 68h4v4h-4zM32 68h4v4h-4zM36 68h4v4h-4zM16 72h4v4h-4zM20 72h4v4h-4zM28 72h4v4h-4zM32 72h4v4h-4zM8 76h4v4h-4zM16 76h4v4h-4zM20 76h4v4h-4zM24 76h4v4h-4zM28 76h4v4h-4zM32 76h4v4h-4zM36 76h4v4h-4zM8 80h4v4h-4zM12 80h4v4h-4zM24 80h4v4h-4zM28 80h4v4h-4zM32 80h4v4h-4zM12 84h4v4h-4zM16 84h4v4h-4zM24 84h4v4h-4zM32 84h4v4h-4zM8 88h4v4h-4zM16 88h4v4h-4zM20 88h4v4h-4zM24 88h4v4h-4zM32 88h4v4h-4zM36 88h4v4h-4zM36 92h4v4h-4zM40 92h4v4h-4z"/><path fill="#303038" d="M112 56h4v4h-4zM108 60h4v4h-4zM112 60h4v4h-4zM108 64h4v4h-4zM112 64h4v4h-4zM116 64h4v4h-4zM108 68h4v4h-4zM116 68h4v4h-4zM108 72h4v4h-4zM112 72h4v4h-4zM108 76h4v4h-4zM112 76h4v4h-4zM116 76h4v4h-4zM108 80h4v4h-4zM116 80h4v4h-4zM112 84h4v4h-4zM108 88h4v4h-4zM112 88h4v4h-4zM116 88h4v4h-4zM112 92h4v4h-4zM108 96h4v4h-4zM112 100h4v4h-4zM116 100h4v4h-4zM108 104h4v4h-4zM116 104h4v4h-4z"/><path fill="#805030" d="M220 56h4v4h-4zM228 56h4v4h-4zM232 56h4v4h-4zM220 60h4v4h-4zM224 60h4v4h-4zM228 60h4v4h-4zM220 64h4v4h-4zM224 64h4v4h-4zM220 68h4v4h-4zM224 68h4v4h-4zM228 68h4v4h-4zM232 68h4v4h-4z"/><path fill="#50a040" d="M192 60h4v4h-4zM200 60h4v4h-4zM200 64h4v4h-4zM192 68h4v4h-4zM196 68h4v4h-4zM200 68h4v4h-4z"/><path fill="#d0d0d0" d="M72 64h4v4h-4zM76 64h4v4h-4zM92 64h4v4h-4zM80 68h4v4h-4zM84 68h4v4h-4zM96 68h4v4h-4zM104 68h4v4h-4zM72 72h4v4h-4zM84 72h4v4h-4zM104 72h4v4h-4zM72 76h4v4h-4zM92 76h4v4h-4zM96 76h4v4h-4zM104 76h4v4h-4zM76 80h4v4h-4zM88 80h4v4h-4zM92 80h4v4h-4zM100 80h4v4h-4zM72 84h4v4h-4zM84 84h4v4h-4zM92 84h4v4h-4zM96 84h4v4h-4zM80 88h4v4h-4zM100 88h4v4h-4zM72 92h4v4h-4zM76 92h4v4h-4zM80 92h4v4h-4zM96 92h4v4h-4zM100 92h4v4h-4zM84 96h4v4h-4zM88 96h4v4h-4zM100 96h4v4h-4zM84 100h4v4h-4zM84 104h4v4h-4zM88 104h4v4h-4zM84 108h4v4h-4zM88 108h4v4h-4zM80 112h4v4h-4zM88 112h4v4h-4zM72 116h4v4h-4zM88 116h4v4h-4zM96 116h4v4h-4z"/><path fill="#70b0e0" d="M60 68h4v4h-4zM64 68h4v4h-4zM56 72h4v4h-4zM60 72h4v4h-4zM64 72h4v4h-4zM68 72h4v4h-4zM60 76h4v4h-4zM64 76h4v4h-4zM68 76h4v4h-4zM56 80h4v4h-4zM60 80h4v4h-4zM64 80h4v4h-4zM68 80h4v4h-4zM60 88h4v4h-4z"/><path fill="#5aa0c0" d="M160 72h4v4h-4zM164 72h4v4h-4zM168 72h4v4h-4zM172 72h4v4h-4zM176 72h4v4h-4zM156 76h4v4h-4zM168 76h4v4h-4zM180 76h4v4h-4zM160 80h4v4h-4zM164 80h4v4h-4zM172 80h4v4h-4zM160 84h4v4h-4zM164 84h4v4h-4zM168 84h4v4h-4zM172 84h4v4h-4zM180 84h4v4h-4zM156 88h4v4h-4zM160 88h4v4h-4zM168 88h4v4h-4zM176 88h4v4h-4zM180 88h4v4h-4z"/><path fill="#e8b0c0" d="M220 72h4v4h-4zM236 72h4v4h-4zM240 72h4v4h-4zM228 76h4v4h-4zM220 80h4v4h-4zM224 80h4v4h-4zM220 84h4v4h-4zM224 84h4v4h-4zM224 88h4v4h-4zM236 92h4v4h-4zM240 92h4v4h-4z"/><path fill="#a02040" d="M232 80h4v4h-4zM236 80h4v4h-4zM240 80h4v4h-4zM228 84h4v4h-4zM232 84h4v4h-4zM240 88h4v4h-4z"/><path fill="#e89030" d="M200 92h4v4h-4zM204 92h4v4h-4zM208 92h4v4h-4zM212 92h4v4h-4zM216 92h4v4h-4zM220 92h4v4h-4zM224 92h4v4h-4zM228 92h4v4h-4zM200 96h4v4h-4zM204 96h4v4h-4zM208 96h4v4h-4zM212 96h4v4h-4zM216 96h4v4h-4zM220 96h4v4h-4zM224 96h4v4h-4zM228 96h4v4h-4zM200 100h4v4h-4zM204 100h4v4h-4zM208 100h4v4h-4zM216 100h4v4h-4zM220 100h4v4h-4zM224 100h4v4h-4zM228 100h4v4h-4zM200 104h4v4h-4zM204 104h4v4h-4zM220 104h4v4h-4zM224 104h4v4h-4zM228 104h4v4h-4zM200 108h4v4h-4z"/><path fill="#c02028" d="M0 104h4v4h-4zM8 104h4v4h-4zM12 104h4v4h-4zM16 104h4v4h-4zM20 104h4v4h-4zM24 104h4v4h-4zM28 104h4v4h-4zM32 104h4v4h-4zM36 104h4v4h-4zM40 104h4v4h-4zM44 104h4v4h-4zM0 108h4v4h-4zM4 108h4v4h-4zM8 108h4v4h-4zM12 108h4v4h-4zM16 108h4v4h-4zM20 108h4v4h-4zM28 108h4v4h-4zM32 108h4v4h-4zM40 108h4v4h-4zM44 108h4v4h-4zM0 112h4v4h-4zM12 112h4v4h-4zM16 112h4v4h-4zM20 112h4v4h-4zM24 112h4v4h-4zM28 112h4v4h-4zM40 112h4v4h-4zM44 112h4v4h-4zM0 116h4v4h-4zM4 116h4v4h-4zM12 116h4v4h-4zM16 116h4v4h-4zM24 116h4v4h-4zM28 116h4v4h-4zM40 116h4v4h-4zM44 116h4v4h-4zM28 120h4v4h-4zM32 120h4v4h-4zM40 120h4v4h-4zM44 120h4v4h-4zM0 124h4v4h-4zM4 124h4v4h-4zM28 124h4v4h-4zM32 124h4v4h-4zM40 124h4v4h-4zM44 124h4v4h-4zM4 128h4v4h-4zM28 128h4v4h-4zM32 128h4v4h-4zM36 128h4v4h-4zM4 132h4v4h-4zM28 132h4v4h-4zM32 132h4v4h-4zM36 132h4v4h-4zM0 136h4v4h-4zM8 136h4v4h-4zM16 136h4v4h-4zM0 140h4v4h-4zM4 140h4v4h-4zM12 140h4v4h-4zM16 140h4v4h-4zM0 144h4v4h-4zM4 144h4v4h-4zM8 144h4v4h-4zM12 144h4v4h-4zM8 148h4v4h-4zM16 148h4v4h-4z"/><path fill="#2a2a4a" d="M120 104h4v4h-4zM124 104h4v4h-4zM128 104h4v4h-4zM136 104h4v4h-4zM120 108h4v4h-4zM132 108h4v4h-4zM140 108h4v4h-4zM144 108h4v4h-4zM120 112h4v4h-4zM136 112h4v4h-4zM140 112h4v4h-4zM144 112h4v4h-4zM120 116h4v4h-4zM124 116h4v4h-4zM128 116h4v4h-4zM132 116h4v4h-4zM140 116h4v4h-4zM144 116h4v4h-4zM120 120h4v4h-4zM124 120h4v4h-4zM128 120h4v4h-4zM132 120h4v4h-4zM140 120h4v4h-4zM144 120h4v4h-4zM120 124h4v4h-4zM124 124h4v4h-4zM128 124h4v4h-4zM136 124h4v4h-4zM144 124h4v4h-4zM120 128h4v4h-4zM128 128h4v4h-4zM140 128h4v4h-4zM120 132h4v4h-4zM140 132h4v4h-4zM144 132h4v4h-4zM124 136h4v4h-4zM128 136h4v4h-4zM136 136h4v4h-4zM144 136h4v4h-4zM128 140h4v4h-4zM132 140h4v4h-4zM140 140h4v4h-4zM144 140h4v4h-4zM124 144h4v4h-4zM132 144h4v4h-4zM120 148h4v4h-4zM136 148h4v4h-4zM144 148h4v4h-4zM124 152h4v4h-4zM128 152h4v4h-4zM132 152h4v4h-4zM140 152h4v4h-4zM144 152h4v4h-4zM128 156h4v4h-4zM132 156h4v4h-4zM136 156h4v4h-4zM120 160h4v4h-4zM132 160h4v4h-4zM140 160h4v4h-4zM128 164h4v4h-4zM132 164h4v4h-4zM136 164h4v4h-4zM144 164h4v4h-4z"/><path fill="#d8d8d8" d="M148 104h4v4h-4zM156 104h4v4h-4zM160 104h4v4h-4zM164 108h4v4h-4zM168 108h4v4h-4zM172 108h4v4h-4zM152 112h4v4h-4zM148 116h4v4h-4zM152 116h4v4h-4zM160 116h4v4h-4zM172 116h4v4h-4zM148 120h4v4h-4zM164 120h4v4h-4zM156 124h4v4h-4zM164 124h4v4h-4zM172 124h4v4h-4zM148 128h4v4h-4z"/><path fill="#2a3050" d="M104 108h4v4h-4zM108 108h4v4h-4zM112 108h4v4h-4zM116 108h4v4h-4zM100 112h4v4h-4zM104 112h4v4h-4zM116 112h4v4h-4zM100 116h4v4h-4zM104 116h4v4h-4zM116 116h4v4h-4zM100 120h4v4h-4zM108 120h4v4h-4zM112 120h4v4h-4zM116 120h4v4h-4zM100 124h4v4h-4zM104 124h4v4h-4zM108 128h4v4h-4zM112 128h4v4h-4zM116 128h4v4h-4zM100 132h4v4h-4zM104 132h4v4h-4zM100 136h4v4h-4zM104 136h4v4h-4zM108 136h4v4h-4zM100 140h4v4h-4zM104 140h4v4h-4zM112 140h4v4h-4zM100 144h4v4h-4zM108 144h4v4h-4zM112 144h4v4h-4z"/><path fill="#e8d040" d="M208 108h4v4h-4zM212 108h4v4h-4zM216 108h4v4h-4zM204 112h4v4h-4zM212 112h4v4h-4zM224 112h4v4h-4zM212 116h4v4h-4zM224 116h4v4h-4zM204 120h4v4h-4zM212 120h4v4h-4zM216 120h4v4h-4zM220 120h4v4h-4zM224 120h4v4h-4zM228 120h4v4h-4zM204 124h4v4h-4zM208 124h4v4h-4zM228 124h4v4h-4zM208 128h4v4h-4zM212 128h4v4h-4zM224 128h4v4h-4zM228 128h4v4h-4z"/><path fill="#802030" d="M236 112h4v4h-4zM240 112h4v4h-4zM232 116h4v4h-4zM236 120h4v4h-4zM232 124h4v4h-4zM236 128h4v4h-4zM240 132h4v4h-4zM232 136h4v4h-4zM236 136h4v4h-4zM240 140h4v4h-4zM236 144h4v4h-4zM232 148h4v4h-4zM236 148h4v4h-4zM240 148h4v4h-4zM232 152h4v4h-4zM240 152h4v4h-4zM232 156h4v4h-4z"/><path fill="#c09090" d="M8 120h4v4h-4zM12 120h4v4h-4zM16 120h4v4h-4zM20 120h4v4h-4zM24 120h4v4h-4zM8 124h4v4h-4zM20 124h4v4h-4zM24 124h4v4h-4zM12 128h4v4h-4zM16 128h4v4h-4zM20 128h4v4h-4zM24 128h4v4h-4zM12 132h4v4h-4zM16 132h4v4h-4zM20 132h4v4h-4zM24 132h4v4h-4z"/><path fill="#901820" d="M40 128h4v4h-4zM52 128h4v4h-4zM56 128h4v4h-4zM60 128h4v4h-4zM72 128h4v4h-4zM76 128h4v4h-4zM92 128h4v4h-4zM44 132h4v4h-4zM60 132h4v4h-4zM64 132h4v4h-4zM72 132h4v4h-4zM76 132h4v4h-4zM88 132h4v4h-4zM92 132h4v4h-4zM96 132h4v4h-4zM40 136h4v4h-4zM60 136h4v4h-4zM72 136h4v4h-4zM76 136h4v4h-4zM88 136h4v4h-4zM96 136h4v4h-4zM40 140h4v4h-4zM44 140h4v4h-4zM48 140h4v4h-4zM52 140h4v4h-4zM60 140h4v4h-4zM64 140h4v4h-4zM72 140h4v4h-4zM76 140h4v4h-4zM80 140h4v4h-4zM84 140h4v4h-4zM88 140h4v4h-4zM92 140h4v4h-4zM96 140h4v4h-4zM52 144h4v4h-4zM60 144h4v4h-4zM68 144h4v4h-4zM76 144h4v4h-4zM80 144h4v4h-4zM84 144h4v4h-4zM92 144h4v4h-4zM60 148h4v4h-4zM64 148h4v4h-4zM68 148h4v4h-4zM80 148h4v4h-4zM84 148h4v4h-4zM96 148h4v4h-4zM104 148h4v4h-4zM108 148h4v4h-4zM44 152h4v4h-4zM56 152h4v4h-4zM64 152h4v4h-4zM72 152h4v4h-4zM76 152h4v4h-4zM80 152h4v4h-4zM92 152h4v4h-4zM96 152h4v4h-4zM100 152h4v4h-4zM112 152h4v4h-4zM116 152h4v4h-4zM40 156h4v4h-4zM52 156h4v4h-4zM56 156h4v4h-4zM60 156h4v4h-4zM64 156h4v4h-4zM76 156h4v4h-4zM80 156h4v4h-4zM84 156h4v4h-4zM88 156h4v4h-4zM100 156h4v4h-4zM104 156h4v4h-4zM108 156h4v4h-4zM116 156h4v4h-4zM40 160h4v4h-4zM44 160h4v4h-4zM48 160h4v4h-4zM52 160h4v4h-4zM56 160h4v4h-4zM68 160h4v4h-4zM72 160h4v4h-4zM80 160h4v4h-4zM88 160h4v4h-4zM92 160h4v4h-4zM96 160h4v4h-4zM104 160h4v4h-4zM108 160h4v4h-4zM112 160h4v4h-4zM116 160h4v4h-4zM48 164h4v4h-4zM56 164h4v4h-4zM60 164h4v4h-4zM64 164h4v4h-4zM68 164h4v4h-4zM76 164h4v4h-4zM92 164h4v4h-4zM96 164h4v4h-4zM100 164h4v4h-4zM104 164h4v4h-4zM108 164h4v4h-4zM116 164h4v4h-4zM40 168h4v4h-4zM44 168h4v4h-4zM56 168h4v4h-4zM72 168h4v4h-4zM84 168h4v4h-4zM88 168h4v4h-4zM96 168h4v4h-4zM100 168h4v4h-4zM104 168h4v4h-4zM116 168h4v4h-4zM120 168h4v4h-4z"/><path fill="#c02828" d="M160 128h4v4h-4zM164 128h4v4h-4zM168 128h4v4h-4zM172 128h4v4h-4zM180 128h4v4h-4zM184 128h4v4h-4zM152 132h4v4h-4zM156 132h4v4h-4zM160 132h4v4h-4zM164 132h4v4h-4zM168 132h4v4h-4zM180 132h4v4h-4zM152 136h4v4h-4zM156 136h4v4h-4zM160 136h4v4h-4zM168 136h4v4h-4zM172 136h4v4h-4zM152 140h4v4h-4zM160 140h4v4h-4zM172 140h4v4h-4zM152 144h4v4h-4zM156 144h4v4h-4zM160 144h4v4h-4zM168 144h4v4h-4zM172 144h4v4h-4zM176 144h4v4h-4zM156 148h4v4h-4zM160 148h4v4h-4zM164 148h4v4h-4zM176 148h4v4h-4z"/><path fill="#5a3a2a" d="M192 132h4v4h-4zM204 132h4v4h-4zM208 132h4v4h-4zM212 132h4v4h-4zM216 132h4v4h-4zM220 132h4v4h-4zM200 136h4v4h-4zM208 136h4v4h-4zM212 136h4v4h-4zM216 136h4v4h-4zM220 136h4v4h-4zM224 136h4v4h-4zM228 136h4v4h-4zM220 140h4v4h-4zM224 140h4v4h-4z"/><path fill="#909090" d="M20 136h4v4h-4zM24 136h4v4h-4zM32 136h4v4h-4zM20 140h4v4h-4zM24 140h4v4h-4zM32 140h4v4h-4zM28 144h4v4h-4zM20 148h4v4h-4zM28 148h4v4h-4zM32 148h4v4h-4z"/><path fill="#ffffff" d="M180 140h4v4h-4zM200 140h4v4h-4zM204 140h4v4h-4zM204 144h4v4h-4zM212 144h4v4h-4zM216 144h4v4h-4zM184 148h4v4h-4zM200 148h4v4h-4zM0 152h4v4h-4zM8 152h4v4h-4zM16 152h4v4h-4zM20 152h4v4h-4zM24 152h4v4h-4zM28 152h4v4h-4zM192 152h4v4h-4zM196 152h4v4h-4zM204 152h4v4h-4zM4 156h4v4h-4zM8 156h4v4h-4zM20 156h4v4h-4zM192 156h4v4h-4zM204 156h4v4h-4zM208 156h4v4h-4zM212 156h4v4h-4zM0 160h4v4h-4zM12 160h4v4h-4zM16 160h4v4h-4zM24 160h4v4h-4zM28 160h4v4h-4zM32 160h4v4h-4zM36 160h4v4h-4zM184 160h4v4h-4zM208 160h4v4h-4zM8 164h4v4h-4zM12 164h4v4h-4zM16 164h4v4h-4zM20 164h4v4h-4zM24 164h4v4h-4zM28 164h4v4h-4zM36 164h4v4h-4zM188 164h4v4h-4zM192 164h4v4h-4zM216 164h4v4h-4zM8 168h4v4h-4zM12 168h4v4h-4zM20 168h4v4h-4zM24 168h4v4h-4zM36 168h4v4h-4zM192 168h4v4h-4zM208 168h4v4h-4zM212 168h4v4h-4zM216 168h4v4h-4z"/><path fill="#a06060" d="M224 160h4v4h-4zM232 164h4v4h-4zM224 168h4v4h-4zM232 168h4v4h-4zM240 168h4v4h-4z"/></svg>
<div class="t " style="left:2279.0px;top:209.3px;font-size:20.7px;color:#cecece;font-family:'Liberation Sans',sans-serif;font-weight:bold;">Schmuckfarben rasterisieren.</div>
<div class="hl" style="left:2274px;top:235px;width:331px"></div>
<div class="a" style="left:2281px;top:248px;width:18px;height:18px;background:#1c1c1c;border:1px solid #b8b8b8"></div>
<svg class="a" style="left:2281px;top:246px;overflow:visible" width="20" height="20"><path d="M3 10 L8 16 L17 3" stroke="#e6e6e6" stroke-width="3" fill="none"/></svg>
<div class="t " style="left:2310.0px;top:243.0px;font-size:25.4px;color:#cecece;font-family:'Liberation Sans',sans-serif;">White</div>
<div class="hl" style="left:2274px;top:421px;width:331px"></div>
<div class="rad ro" style="left:2279.5px;top:430.5px;width:23.0px;height:23.0px"></div>
<div class="t " style="left:2310.5px;top:428.0px;font-size:25.4px;color:#cecece;font-family:'Liberation Sans',sans-serif;">Auto</div>
<div class="rad rb" style="left:2385.5px;top:430.5px;width:23.0px;height:23.0px"></div>
<div class="t " style="left:2417.0px;top:428.0px;font-size:25.4px;color:#cecece;font-family:'Liberation Sans',sans-serif;">Keine</div>
<div class="rad rb" style="left:2505.5px;top:430.5px;width:23.0px;height:23.0px"></div>
<div class="t " style="left:2536.0px;top:428.0px;font-size:25.4px;color:#cecece;font-family:'Liberation Sans',sans-serif;">Alle</div>
<div class="a" style="left:1999px;top:488px;width:604px;height:211px;border:2px solid #161616;box-shadow:inset 0 0 0 1px #3a3a3a, 0 0 0 1px #3a3a3a"></div>
<div class="a" style="left:2126px;top:476px;width:352px;height:20px;background:#2e2e30;"></div>
<div class="t " style="left:2131.6px;top:476.6px;font-size:21.4px;color:#cecece;font-family:'Liberation Sans',sans-serif;font-weight:bold;">Vorschau-Einstellungen (PS/PDF)</div>
<div class="t " style="left:2023.5px;top:522.0px;font-size:25.4px;color:#cecece;font-family:'Liberation Sans',sans-serif;">PDF-Engine</div>
<div class="t " style="left:2177.0px;top:522.0px;font-size:25.4px;color:#cecece;font-family:'Liberation Sans',sans-serif;">:</div>
<div class="rad ro" style="left:2199.5px;top:524.5px;width:23.0px;height:23.0px"></div>
<div class="t " style="left:2231.0px;top:522.0px;font-size:25.4px;color:#cecece;font-family:'Liberation Sans',sans-serif;">APPE</div>
<div class="rad rb" style="left:2324.5px;top:524.5px;width:23.0px;height:23.0px"></div>
<div class="t " style="left:2355.0px;top:522.0px;font-size:25.4px;color:#cecece;font-family:'Liberation Sans',sans-serif;">GhostScript</div>
<div class="hl" style="left:2020px;top:561px;width:564px"></div>
<div class="rad ro" style="left:2023.5px;top:582.5px;width:23.0px;height:23.0px"></div>
<div class="t " style="left:2054.6px;top:580.0px;font-size:25.4px;color:#cecece;font-family:'Liberation Sans',sans-serif;">Auflösung</div>
<div class="ibox" style="left:2179px;top:575px;width:75px;height:40px;"></div>
<div class="t " style="left:2190.0px;top:580.0px;font-size:25.4px;color:#cecece;font-family:'Liberation Sans',sans-serif;">72</div>
<div class="a" style="left:2256px;top:573px;width:14px;height:44px;background:#0e0e0e;"></div>
<div class="a" style="left:2257px;top:592.8px;width:12px;height:4.4px;background:#2a2a2a;"></div>
<svg class="a" style="left:2256px;top:573px;overflow:visible" width="14" height="44"><path d="M7 5.279999999999999 V15.84 M2.5 10.559999999999999 H11.5" stroke="#e0e0e0" stroke-width="2.5"/><path d="M2.5 34.32 H11.5" stroke="#e0e0e0" stroke-width="2.5"/></svg>
<div class="rad rb" style="left:2313.9px;top:582.5px;width:23.0px;height:23.0px"></div>
<div class="t " style="left:2344.8px;top:580.0px;font-size:25.4px;color:#cecece;font-family:'Liberation Sans',sans-serif;">Größe (MB)</div>
<div class="ibox" style="left:2493px;top:575px;width:75px;height:40px;"></div>
<div class="t " style="left:2503.0px;top:580.0px;font-size:25.4px;color:#cecece;font-family:'Liberation Sans',sans-serif;">10</div>
<div class="a" style="left:2570px;top:573px;width:14px;height:44px;background:#0e0e0e;"></div>
<div class="a" style="left:2571px;top:592.8px;width:12px;height:4.4px;background:#2a2a2a;"></div>
<svg class="a" style="left:2570px;top:573px;overflow:visible" width="14" height="44"><path d="M7 5.279999999999999 V15.84 M2.5 10.559999999999999 H11.5" stroke="#e0e0e0" stroke-width="2.5"/><path d="M2.5 34.32 H11.5" stroke="#e0e0e0" stroke-width="2.5"/></svg>
<div class="hl" style="left:2020px;top:625px;width:564px"></div>
<div class="rad ro" style="left:2023.5px;top:647.5px;width:23.0px;height:23.0px"></div>
<div class="t " style="left:2054.6px;top:645.0px;font-size:25.4px;color:#cecece;font-family:'Liberation Sans',sans-serif;">Alle Seiten</div>
<div class="rad rb" style="left:2198.5px;top:647.5px;width:23.0px;height:23.0px"></div>
<div class="t " style="left:2229.0px;top:645.0px;font-size:25.4px;color:#cecece;font-family:'Liberation Sans',sans-serif;">Seite</div>
<div class="ibox" style="left:2299px;top:639px;width:77px;height:40px;"></div>
<div class="t " style="left:2310.5px;top:645.0px;font-size:25.4px;color:#cecece;font-family:'Liberation Sans',sans-serif;">1</div>
<div class="a" style="left:2377px;top:637px;width:14px;height:44px;background:#0e0e0e;"></div>
<div class="a" style="left:2378px;top:656.8px;width:12px;height:4.4px;background:#2a2a2a;"></div>
<svg class="a" style="left:2377px;top:637px;overflow:visible" width="14" height="44"><path d="M7 5.279999999999999 V15.84 M2.5 10.559999999999999 H11.5" stroke="#e0e0e0" stroke-width="2.5"/><path d="M2.5 34.32 H11.5" stroke="#e0e0e0" stroke-width="2.5"/></svg>
<div class="t " style="left:2403.0px;top:645.0px;font-size:25.4px;color:#cecece;font-family:'Liberation Sans',sans-serif;">bis</div>
<div class="ibox" style="left:2449px;top:639px;width:76px;height:40px;"></div>
<div class="t " style="left:2460.8px;top:645.0px;font-size:25.4px;color:#cecece;font-family:'Liberation Sans',sans-serif;">1</div>
<div class="a" style="left:2527px;top:637px;width:14px;height:44px;background:#0e0e0e;"></div>
<div class="a" style="left:2528px;top:656.8px;width:12px;height:4.4px;background:#2a2a2a;"></div>
<svg class="a" style="left:2527px;top:637px;overflow:visible" width="14" height="44"><path d="M7 5.279999999999999 V15.84 M2.5 10.559999999999999 H11.5" stroke="#e0e0e0" stroke-width="2.5"/><path d="M2.5 34.32 H11.5" stroke="#e0e0e0" stroke-width="2.5"/></svg>
<div class="a" style="left:1999px;top:719px;width:605px;height:268px;background:#2b2b2d;border:2px solid #161616;box-shadow:0 0 0 1px #3c3c3c"></div>
<div class="t " style="left:2015.0px;top:732.3px;font-size:20.5px;color:#cecece;font-family:'Liberation Sans',sans-serif;font-weight:bold;">Datei</div>
<div class="t " style="left:2159.0px;top:729.4px;font-size:25.4px;color:#cecece;font-family:'Liberation Sans',sans-serif;">:</div>
<div class="t " style="left:2182.3px;top:729.4px;font-size:25.4px;color:#cecece;font-family:'Liberation Sans',sans-serif;">CIty_WINTER_WhiteSpot.pdf</div>
<div class="t " style="left:2015.0px;top:776.0px;font-size:20.5px;color:#cecece;font-family:'Liberation Sans',sans-serif;font-weight:bold;">Größe</div>
<div class="t " style="left:2159.0px;top:773.1px;font-size:25.4px;color:#cecece;font-family:'Liberation Sans',sans-serif;">:</div>
<div class="t " style="left:2182.3px;top:773.1px;font-size:25.4px;color:#cecece;font-family:'Liberation Sans',sans-serif;">10.87 MB</div>
<div class="t " style="left:2015.0px;top:819.6px;font-size:20.5px;color:#cecece;font-family:'Liberation Sans',sans-serif;font-weight:bold;">Datum</div>
<div class="t " style="left:2159.0px;top:816.7px;font-size:25.4px;color:#cecece;font-family:'Liberation Sans',sans-serif;">:</div>
<div class="t " style="left:2182.3px;top:816.7px;font-size:25.4px;color:#cecece;font-family:'Liberation Sans',sans-serif;">Di 04 Okt 2016 15:43:56 CDT</div>
<div class="t " style="left:2015.0px;top:862.1px;font-size:20.5px;color:#cecece;font-family:'Liberation Sans',sans-serif;font-weight:bold;">Format</div>
<div class="t " style="left:2159.0px;top:859.2px;font-size:25.4px;color:#cecece;font-family:'Liberation Sans',sans-serif;">:</div>
<div class="t " style="left:2182.3px;top:859.2px;font-size:25.4px;color:#cecece;font-family:'Liberation Sans',sans-serif;">PDF</div>
<div class="t " style="left:2015.0px;top:905.6px;font-size:20.5px;color:#cecece;font-family:'Liberation Sans',sans-serif;font-weight:bold;">Dimensionen</div>
<div class="t " style="left:2159.0px;top:902.7px;font-size:25.4px;color:#cecece;font-family:'Liberation Sans',sans-serif;">:</div>
<div class="t " style="left:2182.3px;top:902.7px;font-size:25.4px;color:#cecece;font-family:'Liberation Sans',sans-serif;">500.00 x 350.00 mm</div>
<div class="t " style="left:2015.0px;top:948.6px;font-size:20.5px;color:#cecece;font-family:'Liberation Sans',sans-serif;font-weight:bold;">Auflösung</div>
<div class="t " style="left:2159.0px;top:945.7px;font-size:25.4px;color:#cecece;font-family:'Liberation Sans',sans-serif;">:</div>
<div class="t " style="left:2182.3px;top:945.7px;font-size:25.4px;color:#cecece;font-family:'Liberation Sans',sans-serif;">1418 x 993, 72 dpi, 5.37 MB</div>
<div class="hl" style="left:2010px;top:765.5px;width:583px"></div>
<div class="hl" style="left:2010px;top:809px;width:583px"></div>
<div class="hl" style="left:2010px;top:852px;width:583px"></div>
<div class="hl" style="left:2010px;top:895px;width:583px"></div>
<div class="hl" style="left:2010px;top:938px;width:583px"></div>
</body></html>
